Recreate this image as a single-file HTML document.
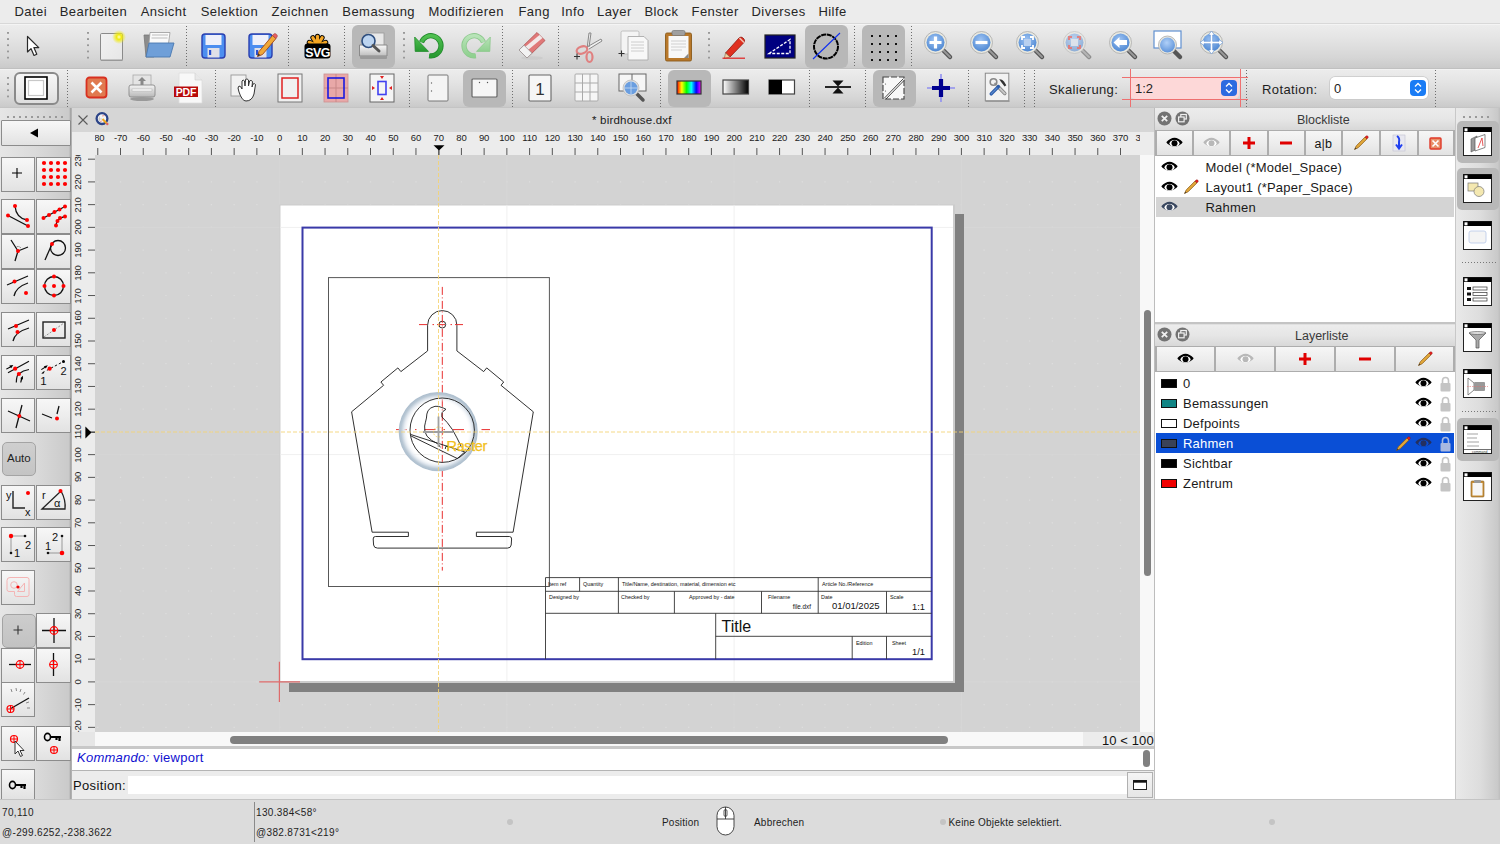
<!DOCTYPE html>
<html><head><meta charset="utf-8"><style>
*{margin:0;padding:0;box-sizing:border-box}
html,body{width:1500px;height:844px;overflow:hidden;background:#e6e6e6;font-family:"Liberation Sans",sans-serif;color:#222}
.a{position:absolute}
.t{position:absolute;white-space:nowrap;line-height:1}
svg{position:absolute;overflow:visible}
#menu{left:0;top:0;width:1500px;height:24px;background:#ececec;border-bottom:1px solid #d8d8d8}
#menu .t{top:5px;font-size:13px;letter-spacing:0.45px;color:#262626}
.tb{left:0;width:1500px;background:linear-gradient(#ececec,#e6e6e6 25%,#d6d6d6 75%,#cacaca)}
#tb1{top:24px;height:45px;border-bottom:1px solid #c0c0c0;border-top:1px solid #f4f4f4}
#tb2{top:69px;height:39px;border-bottom:1px solid #c4c4c4;border-top:1px solid #f2f2f2}
.sep{position:absolute;width:1px;background:linear-gradient(#6e6e6e 50%,transparent 50%) 0 0/1px 3px repeat-y}
.hdl{position:absolute;width:2px;background:linear-gradient(#999 2px,transparent 2px) 0 0/2px 6.2px repeat-y}
.chk{position:absolute;background:#b8b8b8;border-radius:6px}
#left{left:0;top:108px;width:72px;height:691px;background:linear-gradient(90deg,#e6e6e6,#dadada 50%,#cacaca 96%,#a4a4a4 98%,#b8b8b8)}
.btn{position:absolute;background:linear-gradient(#f7f7f7,#eeeeee 45%,#e2e2e2);border:1.5px solid #8c8c8c}
.grp{position:absolute;left:0;width:70px;background:linear-gradient(90deg,#dedede,#cdcdcd 80%,#c0c0c0)}
#tabbar{left:72px;top:108px;width:1082px;height:24px;background:#d6d6d6}
#hruler{left:72px;top:132px;width:1082px;height:23px;background:#ececec}
#vruler{left:72px;top:155px;width:23px;height:577px;background:#ececec}
#vscroll{left:1140px;top:155px;width:14px;height:577px;background:#f8f8f8}
#hscroll{left:95px;top:732px;width:988px;height:14px;background:#f8f8f8}
#zoomlbl{left:1083px;top:732px;width:71px;height:14px;background:#ececec}
#cmdsep{left:72px;top:746px;width:1082px;height:3px;background:#c8c8c8}
#cmd{left:72px;top:749px;width:1082px;height:22px;background:#fff;border-bottom:1.5px solid #b4b4b4}
#posrow{left:72px;top:771px;width:1082px;height:28px;background:#ececec}
#status{left:0;top:799px;width:1500px;height:45px;background:#dcdcdc;border-top:1px solid #c4c4c4}
#dock{left:1154px;top:108px;width:302px;height:691px;background:#fff;border-left:1px solid #bdbdbd}
.dtitle{position:absolute;left:1155px;width:300px;background:linear-gradient(#ececec,#e6e6e6 50%,#d8d8d8)}
.dbar{position:absolute;left:1155px;width:300px;background:#adadad}
.dbtn{position:absolute;background:linear-gradient(#f6f6f6,#ececec 55%,#e2e2e2)}
#strip{left:1456px;top:108px;width:44px;height:691px;background:linear-gradient(90deg,#e9e9e9,#dddddd 55%,#c9c9c9 95%,#bdbdbd)}
.row{position:absolute;left:1156px;width:298px;height:20px;font-size:13px;color:#111}
.rt{position:absolute;white-space:nowrap;line-height:1;font-size:13px;letter-spacing:0.22px;color:#1a1a1a}
.rl{position:absolute;font-size:9.5px;line-height:1;white-space:nowrap;color:#222;letter-spacing:-0.2px}
</style></head><body>
<div id="menu" class="a"><span class="t" style="left:14.4px">Datei</span><span class="t" style="left:59.7px">Bearbeiten</span><span class="t" style="left:140.7px">Ansicht</span><span class="t" style="left:200.7px">Selektion</span><span class="t" style="left:271.5px">Zeichnen</span><span class="t" style="left:342.3px">Bemassung</span><span class="t" style="left:428.4px">Modifizieren</span><span class="t" style="left:518.4px">Fang</span><span class="t" style="left:561.3px">Info</span><span class="t" style="left:597px">Layer</span><span class="t" style="left:644.4px">Block</span><span class="t" style="left:691.5px">Fenster</span><span class="t" style="left:751.5px">Diverses</span><span class="t" style="left:818.4px">Hilfe</span></div>
<div id="tb1" class="a tb"></div><div id="tb2" class="a tb"></div>
<div class="hdl" style="left:7px;top:31.5px;width:2px;height:27px;"></div>
<div class="hdl" style="left:87px;top:31.5px;width:2px;height:27px;"></div>
<div class="hdl" style="left:403px;top:31.5px;width:2px;height:27px;"></div>
<div class="hdl" style="left:708px;top:31.5px;width:2px;height:27px;"></div>
<div class="sep" style="left:186px;top:26px;width:1px;height:41px;"></div>
<div class="sep" style="left:288px;top:26px;width:1px;height:41px;"></div>
<div class="sep" style="left:344px;top:26px;width:1px;height:41px;"></div>
<div class="sep" style="left:502px;top:26px;width:1px;height:41px;"></div>
<div class="sep" style="left:558px;top:26px;width:1px;height:41px;"></div>
<div class="sep" style="left:854px;top:26px;width:1px;height:41px;"></div>
<div class="sep" style="left:911px;top:26px;width:1px;height:41px;"></div>
<div class="chk" style="left:352px;top:25px;width:43px;height:43px;"></div>
<div class="chk" style="left:805px;top:25px;width:43px;height:43px;"></div>
<div class="chk" style="left:862px;top:25px;width:43px;height:43px;"></div>
<svg style="left:26px;top:35px" width="15" height="23" viewBox="0 0 15 23" ><path d="M1.5,1.5 L1.5,17 L5,13.6 L8,20.5 L10.8,19.3 L7.9,12.6 L12.8,12.6 Z" fill="#fff" stroke="#2a2a2a" stroke-width="1.2" stroke-linejoin="round"/></svg>
<svg style="left:99px;top:31px" width="27" height="31" viewBox="0 0 27 31" ><defs><linearGradient id="nd" x1="0" y1="0" x2="1" y2="1"><stop offset="0" stop-color="#f2f2f2"/><stop offset="1" stop-color="#e6e6e6"/></linearGradient><radialGradient id="gl"><stop offset="0" stop-color="#ffffc0"/><stop offset="0.35" stop-color="#f0ea10"/><stop offset="1" stop-color="#f0ea10" stop-opacity="0"/></radialGradient></defs><rect x="1.5" y="2.5" width="22" height="27" rx="1.2" fill="url(#nd)" stroke="#8a8a8a" stroke-width="1"/><rect x="2" y="28.5" width="21.5" height="1.5" fill="#999"/><circle cx="20" cy="6" r="7" fill="url(#gl)"/></svg>
<svg style="left:142px;top:31px" width="34" height="29" viewBox="0 0 34 29" ><path d="M2,4 L12,4 L12,26 L4,26 Z" fill="#8c8c8c" stroke="#777" stroke-width="0.8"/><path d="M8,1.5 L28,1.5 L26,16 L6,22 Z" fill="#fafafa" stroke="#999" stroke-width="0.8"/><path d="M10,4 L26,4 M9.5,7 L25.5,7" stroke="#bbb" stroke-width="1.2"/><path d="M7,12 L32,12 L28,26 L4,26 Z" fill="#6f9fd8" stroke="#4a78b0" stroke-width="0.9"/></svg>
<svg style="left:201px;top:33px" width="26" height="27" viewBox="0 0 26 27" ><rect x="1" y="1" width="23" height="24" rx="3" fill="#4c8ef0" stroke="#2a3fb0" stroke-width="1.4"/><rect x="4.5" y="2" width="16" height="10" fill="#eef0fa"/><rect x="6.5" y="15" width="12" height="9.5" fill="#e0e0e8"/><rect x="8" y="17" width="2.2" height="5" fill="#2a50d0"/></svg>
<svg style="left:248px;top:31px" width="30" height="30" viewBox="0 0 30 30" ><g transform="translate(0,2)"><rect x="1" y="1" width="23" height="24" rx="3" fill="#4c8ef0" stroke="#2a3fb0" stroke-width="1.4"/><rect x="4.5" y="2" width="16" height="10" fill="#eef0fa"/><rect x="6.5" y="15" width="12" height="9.5" fill="#e0e0e8"/><rect x="8" y="17" width="2.2" height="5" fill="#2a50d0"/></g><path d="M9.5,25.5 L11,20.5 L24.5,4.5 L28,7.5 L14.5,23.5 Z" fill="#f0a838" stroke="#a04818" stroke-width="0.9" stroke-linejoin="round"/><path d="M24.5,4.5 L25.8,3 Q27,2 28.3,3.2 L29,3.9 Q29.8,5 29,6 L28,7.5 Z" fill="#e86060" stroke="#a04040" stroke-width="0.6"/><path d="M9.5,25.5 L10.4,22.5 L12.3,24 Z" fill="#333"/></svg>
<svg style="left:304px;top:33px" width="27" height="26" viewBox="0 0 27 26" ><path d="M13.5,12.5 L5.23,9.35" stroke="#000" stroke-width="5" stroke-linecap="round"/><path d="M13.5,12.5 L8.84,4.70" stroke="#000" stroke-width="5" stroke-linecap="round"/><path d="M13.5,12.5 L13.50,3.30" stroke="#000" stroke-width="5" stroke-linecap="round"/><path d="M13.5,12.5 L18.16,4.70" stroke="#000" stroke-width="5" stroke-linecap="round"/><path d="M13.5,12.5 L21.77,9.35" stroke="#000" stroke-width="5" stroke-linecap="round"/><path d="M13.5,12.5 L5.23,9.35" stroke="#f5a623" stroke-width="3.2" stroke-linecap="round"/><path d="M13.5,12.5 L8.84,4.70" stroke="#f5a623" stroke-width="3.2" stroke-linecap="round"/><path d="M13.5,12.5 L13.50,3.30" stroke="#f5a623" stroke-width="3.2" stroke-linecap="round"/><path d="M13.5,12.5 L18.16,4.70" stroke="#f5a623" stroke-width="3.2" stroke-linecap="round"/><path d="M13.5,12.5 L21.77,9.35" stroke="#f5a623" stroke-width="3.2" stroke-linecap="round"/><rect x="0.5" y="10.5" width="26" height="15" rx="3" fill="#000"/><text x="13.5" y="23.6" font-family="Liberation Sans" font-weight="bold" font-size="12.5" fill="#fff" text-anchor="middle" letter-spacing="-0.6" transform="scale(1,1.08)" style="transform-origin:13.5px 23.6px">SVG</text></svg>
<svg style="left:358px;top:31px" width="31" height="30" viewBox="0 0 31 30" ><defs><linearGradient id="pr" x1="0" y1="0" x2="0" y2="1"><stop offset="0" stop-color="#fafafa"/><stop offset="1" stop-color="#bdbdbd"/></linearGradient></defs><rect x="9" y="2" width="17" height="14" fill="#e8e8e8" stroke="#999" stroke-width="0.8"/><path d="M1.5,14 L29,14 L29,25 L1.5,25 Z" fill="url(#pr)" stroke="#8a8a8a" stroke-width="1"/><rect x="2" y="25" width="27" height="3" rx="1" fill="#9a9a9a"/><circle cx="10.5" cy="10" r="6.5" fill="#bcd4f0" stroke="#2e4e7e" stroke-width="1.6"/><path d="M15,14.5 L21,20" stroke="#555" stroke-width="3" stroke-linecap="round"/></svg>
<svg style="left:413px;top:32px" width="32" height="28" viewBox="0 0 32 28" ><defs><linearGradient id="ugu" x1="0" y1="0" x2="0" y2="1"><stop offset="0" stop-color="#50c050"/><stop offset="1" stop-color="#289a30"/></linearGradient></defs><path d="M8.5,10.2 A10.1,10.1 0 1 1 16.2,23.8" fill="none" stroke="#1f8a2a" stroke-width="5.2"/><path d="M8.5,10.2 A10.1,10.1 0 1 1 16.2,23.8" fill="none" stroke="url(#ugu)" stroke-width="3.6"/><path d="M1.7,5 L2.2,19.4 L15.5,19.4 Z" fill="url(#ugu)" stroke="#1f8a2a" stroke-width="0.8" stroke-linejoin="round"/></svg>
<svg style="left:460px;top:32px" width="32" height="28" viewBox="0 0 32 28" ><g transform="translate(32,0) scale(-1,1)"><defs><linearGradient id="ugr" x1="0" y1="0" x2="0" y2="1"><stop offset="0" stop-color="#b8e4b8"/><stop offset="1" stop-color="#90d090"/></linearGradient></defs><path d="M8.5,10.2 A10.1,10.1 0 1 1 16.2,23.8" fill="none" stroke="#8cc88c" stroke-width="5.2"/><path d="M8.5,10.2 A10.1,10.1 0 1 1 16.2,23.8" fill="none" stroke="url(#ugr)" stroke-width="3.6"/><path d="M1.7,5 L2.2,19.4 L15.5,19.4 Z" fill="url(#ugr)" stroke="#8cc88c" stroke-width="0.8" stroke-linejoin="round"/></g></svg>
<svg style="left:517px;top:31px" width="30" height="31" viewBox="0 0 30 31" ><ellipse cx="15" cy="27" rx="11" ry="1.8" fill="#c8c8c8" opacity="0.7"/><path d="M2,19 L20,1.5 L28,9.5 L10,27 Z" fill="#e07878" stroke="#b05050" stroke-width="0.8" stroke-linejoin="round"/><path d="M8,16 L22.5,4 L25.5,7 L11,19 Z" fill="#f4f4f4" opacity="0.9"/><path d="M2,19 L7,14.2 L15,22.2 L10,27 Z" fill="#f2f2f2" stroke="#999" stroke-width="0.8" stroke-linejoin="round"/></svg>
<svg style="left:572px;top:30px" width="31" height="33" viewBox="0 0 31 33" ><path d="M15,19 L17,3 L19,3 L17,17 M15,17 L29,9 L30,11 L17,19" fill="#f0f0f0" stroke="#888" stroke-width="1"/><ellipse cx="10" cy="20" rx="5.5" ry="3.5" fill="none" stroke="#e08080" stroke-width="2.2" transform="rotate(-20 10 20)"/><ellipse cx="17.5" cy="27" rx="3" ry="5" fill="none" stroke="#e08080" stroke-width="2.2"/><path d="M2,26.5 L8,26.5 M5,23.5 L5,29.5" stroke="#333" stroke-width="1.1"/></svg>
<svg style="left:617px;top:29px" width="33" height="34" viewBox="0 0 33 34" ><rect x="4" y="2" width="18" height="23" rx="1.5" fill="#f4f4f4" stroke="#bbb" stroke-width="0.9"/><path d="M11,7.5 L27,7.5 L31,11.5 L31,31 L11,31 Z" fill="#f8f8f8" stroke="#aaa" stroke-width="0.9"/><path d="M14,13 L27,13 M14,16 L27,16 M14,19 L27,19 M14,22 L27,22" stroke="#c8c8c8" stroke-width="0.9"/><path d="M1.5,24.5 L7.5,24.5 M4.5,21.5 L4.5,27.5" stroke="#333" stroke-width="1.1"/></svg>
<svg style="left:664px;top:29px" width="30" height="34" viewBox="0 0 30 34" ><rect x="1.5" y="4" width="26" height="28" rx="1.5" fill="#b8782a" stroke="#8a5a1a" stroke-width="0.9"/><rect x="4.5" y="7" width="20" height="22" fill="#f8f8f8"/><path d="M7,12 L22,12 M7,15 L22,15 M7,18 L22,18 M7,21 L18,21" stroke="#ccc" stroke-width="0.9"/><rect x="8" y="1.5" width="13" height="5" rx="1.5" fill="#a0a0a0" stroke="#777" stroke-width="0.7"/><path d="M20,29 L24.5,24.5 L24.5,29 Z" fill="#888"/></svg>
<svg style="left:722px;top:34px" width="25" height="25" viewBox="0 0 25 25" ><path d="M3.5,19 L17,4 Q19,2 21,4 L22,5 Q23.5,7 21.5,9 L8,23 Z" fill="#e03020" stroke="#901810" stroke-width="0.8"/><path d="M17.5,4 L22,8.5" stroke="#f0c0b0" stroke-width="1.6"/><path d="M3.5,19 L8,23 L2.3,24.5 Z" fill="#f0d0a0" stroke="#806040" stroke-width="0.6"/><path d="M0.5,24.2 L23,24.2" stroke="#e02020" stroke-width="1.2"/></svg>
<svg style="left:764px;top:34px" width="32" height="25" viewBox="0 0 32 25" ><rect x="1" y="1" width="30" height="23" fill="#000080" stroke="#222" stroke-width="1.2"/><path d="M5,19.5 L26,5.5 L26,19.5 Z" fill="none" stroke="#fff" stroke-width="1.3" stroke-dasharray="3,1.5"/></svg>
<svg style="left:811px;top:31px" width="31" height="31" viewBox="0 0 31 31" ><circle cx="15" cy="15.5" r="12" fill="none" stroke="#000" stroke-width="2" stroke-dasharray="5,0.7"/><path d="M2,28 L29,2" stroke="#1030f0" stroke-width="1.1"/></svg>
<svg style="left:870px;top:34px" width="28" height="28" viewBox="0 0 28 28" ><rect x="1" y="1" width="2" height="2" fill="#111"/><rect x="1" y="9" width="2" height="2" fill="#111"/><rect x="1" y="17" width="2" height="2" fill="#111"/><rect x="1" y="25" width="2" height="2" fill="#111"/><rect x="9" y="1" width="2" height="2" fill="#111"/><rect x="9" y="9" width="2" height="2" fill="#111"/><rect x="9" y="17" width="2" height="2" fill="#111"/><rect x="9" y="25" width="2" height="2" fill="#111"/><rect x="17" y="1" width="2" height="2" fill="#111"/><rect x="17" y="9" width="2" height="2" fill="#111"/><rect x="17" y="17" width="2" height="2" fill="#111"/><rect x="17" y="25" width="2" height="2" fill="#111"/><rect x="25" y="1" width="2" height="2" fill="#111"/><rect x="25" y="9" width="2" height="2" fill="#111"/><rect x="25" y="17" width="2" height="2" fill="#111"/><rect x="25" y="25" width="2" height="2" fill="#111"/></svg>
<svg style="left:923px;top:30px" width="31" height="31" viewBox="0 0 31 31" ><defs><radialGradient id="zg923" cx="0.45" cy="0.35" r="0.7"><stop offset="0" stop-color="#9ec4f4"/><stop offset="1" stop-color="#4a84d0"/></radialGradient></defs><path d="M20,20 L27,27" stroke="#555" stroke-width="4.5" stroke-linecap="round"/><path d="M20,20 L27,27" stroke="#999" stroke-width="2" stroke-linecap="round"/><circle cx="12.5" cy="12.5" r="11" fill="#e8e8e0" stroke="#aaa" stroke-width="0.8"/><circle cx="12.5" cy="12.5" r="9" fill="url(#zg923)"/><path d="M12.5,6.5 L12.5,18.5 M6.5,12.5 L18.5,12.5" stroke="#fff" stroke-width="3.2"/></svg>
<svg style="left:969px;top:30px" width="31" height="31" viewBox="0 0 31 31" ><defs><radialGradient id="zg969" cx="0.45" cy="0.35" r="0.7"><stop offset="0" stop-color="#9ec4f4"/><stop offset="1" stop-color="#4a84d0"/></radialGradient></defs><path d="M20,20 L27,27" stroke="#555" stroke-width="4.5" stroke-linecap="round"/><path d="M20,20 L27,27" stroke="#999" stroke-width="2" stroke-linecap="round"/><circle cx="12.5" cy="12.5" r="11" fill="#e8e8e0" stroke="#aaa" stroke-width="0.8"/><circle cx="12.5" cy="12.5" r="9" fill="url(#zg969)"/><path d="M6.5,12.5 L18.5,12.5" stroke="#fff" stroke-width="3.2"/></svg>
<svg style="left:1015px;top:30px" width="31" height="31" viewBox="0 0 31 31" ><defs><radialGradient id="zg1015" cx="0.45" cy="0.35" r="0.7"><stop offset="0" stop-color="#9ec4f4"/><stop offset="1" stop-color="#4a84d0"/></radialGradient></defs><path d="M20,20 L27,27" stroke="#555" stroke-width="4.5" stroke-linecap="round"/><path d="M20,20 L27,27" stroke="#999" stroke-width="2" stroke-linecap="round"/><circle cx="12.5" cy="12.5" r="11" fill="#e8e8e0" stroke="#aaa" stroke-width="0.8"/><circle cx="12.5" cy="12.5" r="9" fill="url(#zg1015)"/><path d="M7,10 L7,7 L10,7 M15,7 L18,7 L18,10 M18,15 L18,18 L15,18 M10,18 L7,18 L7,15" fill="none" stroke="#fff" stroke-width="1.8"/><rect x="9" y="9" width="7" height="7" fill="#b8d0f0"/></svg>
<div class="a" style="left:1062px;top:30px;width:32px;height:31px;opacity:0.55"><svg style="left:0px;top:0px" width="31" height="31" viewBox="0 0 31 31" ><defs><radialGradient id="zg0" cx="0.45" cy="0.35" r="0.7"><stop offset="0" stop-color="#9ec4f4"/><stop offset="1" stop-color="#4a84d0"/></radialGradient></defs><path d="M20,20 L27,27" stroke="#555" stroke-width="4.5" stroke-linecap="round"/><path d="M20,20 L27,27" stroke="#999" stroke-width="2" stroke-linecap="round"/><circle cx="12.5" cy="12.5" r="11" fill="#e8e8e0" stroke="#aaa" stroke-width="0.8"/><circle cx="12.5" cy="12.5" r="9" fill="url(#zg0)"/><path d="M7,10 L7,7 L10,7 M15,7 L18,7 L18,10 M18,15 L18,18 L15,18 M10,18 L7,18 L7,15" fill="none" stroke="#e03030" stroke-width="2"/><rect x="9" y="9" width="7" height="7" fill="#d8e4f4"/></svg>
</div><svg style="left:1108px;top:30px" width="31" height="31" viewBox="0 0 31 31" ><defs><radialGradient id="zg1108" cx="0.45" cy="0.35" r="0.7"><stop offset="0" stop-color="#9ec4f4"/><stop offset="1" stop-color="#4a84d0"/></radialGradient></defs><path d="M20,20 L27,27" stroke="#555" stroke-width="4.5" stroke-linecap="round"/><path d="M20,20 L27,27" stroke="#999" stroke-width="2" stroke-linecap="round"/><circle cx="12.5" cy="12.5" r="11" fill="#e8e8e0" stroke="#aaa" stroke-width="0.8"/><circle cx="12.5" cy="12.5" r="9" fill="url(#zg1108)"/><path d="M5.5,12.5 L11.5,7 L11.5,10 L19,10 L19,15 L11.5,15 L11.5,18 Z" fill="#fff"/></svg>
<svg style="left:1153px;top:30px" width="31" height="31" viewBox="0 0 31 31" ><defs><radialGradient id="zw" cx="0.45" cy="0.35" r="0.7"><stop offset="0" stop-color="#b0d0f8"/><stop offset="1" stop-color="#5a90d8"/></radialGradient></defs><rect x="1" y="1" width="27" height="17" fill="#fff" stroke="#6090d0" stroke-width="1.2"/><path d="M20,20 L27,27" stroke="#555" stroke-width="4.5" stroke-linecap="round"/><circle cx="14.5" cy="15" r="9" fill="#e8e8e0" stroke="#aaa" stroke-width="0.8"/><circle cx="14.5" cy="15" r="7.5" fill="url(#zw)"/></svg>
<svg style="left:1199px;top:30px" width="31" height="31" viewBox="0 0 31 31" ><defs><radialGradient id="zg1199" cx="0.45" cy="0.35" r="0.7"><stop offset="0" stop-color="#9ec4f4"/><stop offset="1" stop-color="#4a84d0"/></radialGradient></defs><path d="M20,20 L27,27" stroke="#555" stroke-width="4.5" stroke-linecap="round"/><path d="M20,20 L27,27" stroke="#999" stroke-width="2" stroke-linecap="round"/><circle cx="12.5" cy="12.5" r="11" fill="#e8e8e0" stroke="#aaa" stroke-width="0.8"/><circle cx="12.5" cy="12.5" r="9" fill="url(#zg1199)"/><path d="M12.5,1 L9.5,5 L11.3,5 L11.3,11.3 L5,11.3 L5,9.5 L1,12.5 L5,15.5 L5,13.7 L11.3,13.7 L11.3,20 L9.5,20 L12.5,24 L15.5,20 L13.7,20 L13.7,13.7 L20,13.7 L20,15.5 L24,12.5 L20,9.5 L20,11.3 L13.7,11.3 L13.7,5 L15.5,5 Z" fill="#fff" stroke="#6a9ad8" stroke-width="0.7"/></svg>
<div class="hdl" style="left:7px;top:77px;width:2px;height:21px;"></div>
<div class="sep" style="left:67px;top:70px;width:1px;height:37px;"></div>
<div class="sep" style="left:215px;top:70px;width:1px;height:37px;"></div>
<div class="sep" style="left:409px;top:70px;width:1px;height:37px;"></div>
<div class="sep" style="left:512px;top:70px;width:1px;height:37px;"></div>
<div class="sep" style="left:660px;top:70px;width:1px;height:37px;"></div>
<div class="sep" style="left:809px;top:70px;width:1px;height:37px;"></div>
<div class="sep" style="left:865px;top:70px;width:1px;height:37px;"></div>
<div class="sep" style="left:968px;top:70px;width:1px;height:37px;"></div>
<div class="sep" style="left:1024px;top:70px;width:1px;height:37px;"></div>
<div class="sep" style="left:1034px;top:70px;width:1px;height:37px;"></div>
<div class="sep" style="left:1246px;top:70px;width:1px;height:37px;"></div>
<div class="sep" style="left:1435px;top:70px;width:1px;height:37px;"></div>
<div class="chk" style="left:463px;top:70px;width:43px;height:37px;"></div>
<div class="chk" style="left:668px;top:70px;width:43px;height:37px;"></div>
<div class="chk" style="left:873px;top:70px;width:43px;height:37px;"></div>
<div class="a" style="left:14px;top:72px;width:45px;height:33px;border:2.2px solid #8a8a8a;border-radius:6px;background:linear-gradient(#f6f6f6,#ececec 50%,#dedede)"></div>
<svg style="left:24px;top:76px" width="25" height="25" viewBox="0 0 25 25" ><rect x="1" y="1" width="22" height="22" fill="#fff" stroke="#000" stroke-width="1.6"/><rect x="4.5" y="4.5" width="15" height="15" fill="none" stroke="#c8c8c8" stroke-width="1.2"/></svg>
<svg style="left:85px;top:76px" width="23" height="23" viewBox="0 0 23 23" ><rect x="1.5" y="1.5" width="20" height="20" rx="3" fill="#e07a50" stroke="#d83020" stroke-width="1.8"/><path d="M6.5,6.5 L16.5,16.5 M16.5,6.5 L6.5,16.5" stroke="#fff" stroke-width="2.6"/></svg>
<svg style="left:128px;top:74px" width="29" height="28" viewBox="0 0 29 28" ><defs><linearGradient id="pp" x1="0" y1="0" x2="0" y2="1"><stop offset="0" stop-color="#f4f4f4"/><stop offset="1" stop-color="#b8b8b8"/></linearGradient></defs><rect x="5" y="1" width="18" height="11" fill="#e4e4e4" stroke="#aaa" stroke-width="0.8"/><path d="M14,3 L10,7 L12.5,7 L12.5,11 L15.5,11 L15.5,7 L18,7 Z" fill="#888"/><rect x="1" y="11" width="26" height="12" rx="2" fill="url(#pp)" stroke="#8a8a8a" stroke-width="0.9"/><rect x="4" y="15" width="20" height="2" fill="#fff" stroke="#aaa" stroke-width="0.5"/><ellipse cx="14" cy="25" rx="12" ry="2" fill="#999"/></svg>
<svg style="left:173px;top:72px" width="31" height="33" viewBox="0 0 31 33" ><path d="M6,1 L22,1 L29,8 L29,31 L6,31 Z" fill="#f8f8f8" stroke="#ddd" stroke-width="0.8"/><path d="M22,1 L22,8 L29,8" fill="#e8e8e8" stroke="#ccc" stroke-width="0.6"/><rect x="1" y="14.5" width="24" height="10.5" fill="#b80a0a"/><text x="13" y="23.6" font-family="Liberation Sans" font-weight="bold" font-size="10.5" fill="#fff" text-anchor="middle" letter-spacing="-0.2">PDF</text></svg>
<svg style="left:230px;top:74px" width="28" height="28" viewBox="0 0 28 28" ><rect x="1" y="1" width="15" height="21" fill="#f2f2f2" stroke="#999" stroke-width="0.9"/><path d="M9,18 Q7,13 9,12 Q11,12 12,15 L12,7 Q13,5 14.5,7 L15,12 L15.5,5.5 Q17,4 18.5,6 L18.5,12 L19.5,7 Q21,5.5 22.5,7.5 L22,13 L23,10 Q24.5,9 25.5,10.5 L24,20 Q22,27 16,27 Q12,27 9,18 Z" fill="#fff" stroke="#333" stroke-width="1"/></svg>
<svg style="left:277px;top:73px" width="27" height="30" viewBox="0 0 27 30" ><rect x="1" y="1" width="24" height="28" fill="#f0f0f0" stroke="#777" stroke-width="1"/><rect x="5" y="5" width="16" height="20" fill="none" stroke="#e02020" stroke-width="1.5"/></svg>
<svg style="left:323px;top:73px" width="27" height="30" viewBox="0 0 27 30" ><rect x="1" y="1" width="24" height="28" fill="#e8a8a8" stroke="#cc9090" stroke-width="0.8"/><path d="M13,1 L13,29 M1,15 L25,15" stroke="#c88888" stroke-width="1"/><rect x="5" y="5" width="16" height="20" fill="none" stroke="#1818e0" stroke-width="1.6"/></svg>
<svg style="left:369px;top:73px" width="27" height="30" viewBox="0 0 27 30" ><rect x="1" y="1" width="24" height="28" fill="#f4f4f4" stroke="#666" stroke-width="1"/><rect x="9" y="8.5" width="8" height="13" fill="none" stroke="#4040f0" stroke-width="1.6"/><path d="M11,3 L15,3 L13,6 Z M11,27 L15,27 L13,24 Z M3,13 L3,17 L6,15 Z M23,13 L23,17 L20,15 Z" fill="#e02020"/></svg>
<svg style="left:427px;top:74px" width="23" height="28" viewBox="0 0 23 28" ><rect x="1" y="1" width="20" height="26" rx="1" fill="#f4f4f4" stroke="#777" stroke-width="1"/><circle cx="4.5" cy="9" r="0.7" fill="#666"/><circle cx="4.5" cy="17" r="0.7" fill="#666"/></svg>
<svg style="left:471px;top:78px" width="27" height="21" viewBox="0 0 27 21" ><rect x="1" y="1" width="25" height="18" rx="1" fill="#f6f6f6" stroke="#666" stroke-width="1.2"/><circle cx="8.5" cy="4.5" r="0.7" fill="#555"/><circle cx="16.5" cy="4.5" r="0.7" fill="#555"/></svg>
<svg style="left:528px;top:74px" width="25" height="29" viewBox="0 0 25 29" ><rect x="1" y="1" width="22" height="26" rx="1" fill="#f6f6f6" stroke="#666" stroke-width="1.1"/><text x="12" y="21" font-family="Liberation Sans" font-size="17" fill="#333" text-anchor="middle">1</text></svg>
<svg style="left:574px;top:73px" width="25" height="30" viewBox="0 0 25 30" ><rect x="1" y="1" width="23" height="27" rx="1" fill="#f6f6f6" stroke="#aaa" stroke-width="1"/><path d="M8.5,1 L8.5,28 M16,1 L16,28 M1,10 L24,10 M1,19 L24,19" stroke="#aaa" stroke-width="1"/></svg>
<svg style="left:618px;top:73px" width="29" height="30" viewBox="0 0 29 30" ><rect x="1" y="1" width="27" height="17" fill="#f6f6f6" stroke="#666" stroke-width="1"/><path d="M14,1 L14,18" stroke="#666" stroke-width="1"/><path d="M17,19 L25,27" stroke="#555" stroke-width="3.5" stroke-linecap="round"/><circle cx="13" cy="15" r="8" fill="#e0e0e0" stroke="#bbb" stroke-width="0.8"/><circle cx="13" cy="15" r="6.5" fill="#6a9ee0"/><path d="M6.5,15 L19.5,15 M13,8.5 L13,21.5" stroke="#c8dcf4" stroke-width="0.8"/></svg>
<svg style="left:676px;top:80px" width="27" height="16" viewBox="0 0 27 16" ><defs><linearGradient id="rb"><stop offset="0" stop-color="#ff0000"/><stop offset="0.2" stop-color="#ffff00"/><stop offset="0.4" stop-color="#00ff00"/><stop offset="0.6" stop-color="#00ffff"/><stop offset="0.8" stop-color="#0000ff"/><stop offset="1" stop-color="#ff00ff"/></linearGradient></defs><rect x="1" y="1" width="24" height="13" fill="url(#rb)" stroke="#333" stroke-width="1.2"/></svg>
<svg style="left:722px;top:79px" width="28" height="17" viewBox="0 0 28 17" ><defs><linearGradient id="gr"><stop offset="0" stop-color="#fff"/><stop offset="1" stop-color="#000"/></linearGradient></defs><rect x="1" y="1" width="25.5" height="14" fill="url(#gr)" stroke="#444" stroke-width="1.2"/></svg>
<svg style="left:768px;top:79px" width="28" height="17" viewBox="0 0 28 17" ><rect x="1" y="1" width="25.5" height="14" fill="#fff" stroke="#444" stroke-width="1.2"/><rect x="1" y="1" width="13" height="14" fill="#000"/></svg>
<svg style="left:824px;top:80px" width="28" height="14" viewBox="0 0 28 14" ><path d="M1,7 L27,7" stroke="#111" stroke-width="1.8"/><path d="M8.5,0.5 L19.5,0.5 L14,6.5 Z M8.5,13.5 L19.5,13.5 L14,7.5 Z" fill="#111"/></svg>
<svg style="left:882px;top:76px" width="24" height="25" viewBox="0 0 24 25" ><rect x="1" y="1" width="21" height="22" fill="#f8f8f8" stroke="#444" stroke-width="1.1" stroke-dasharray="6,2"/><path d="M2,22.5 L21.5,2.5 M4,23 L22,4.5" stroke="#333" stroke-width="0.9"/><circle cx="3.5" cy="8" r="0.6" fill="#555"/><circle cx="3.5" cy="15" r="0.6" fill="#555"/></svg>
<svg style="left:926px;top:73px" width="30" height="30" viewBox="0 0 30 30" ><path d="M15,1 L15,29 M1,15 L29,15" stroke="#9090f0" stroke-width="1.6"/><path d="M15,6 L15,24 M6,15 L24,15" stroke="#000090" stroke-width="4.2"/></svg>
<svg style="left:984px;top:72px" width="27" height="31" viewBox="0 0 27 31" ><rect x="1.3" y="1.2" width="23.5" height="27.6" fill="#f2f2f2" stroke="#8a8a8a" stroke-width="1"/><rect x="1.5" y="28.5" width="24" height="1.5" fill="#9a9a9a"/><path d="M14,14.5 L20.8,21.5" stroke="#777" stroke-width="3.4" stroke-linecap="round"/><path d="M14,14.5 L20.8,21.5" stroke="#c8c8c8" stroke-width="2" stroke-linecap="round"/><path d="M7.2,21.9 L14.4,14.6" stroke="#2a5aa8" stroke-width="3.4" stroke-linecap="round"/><path d="M7.2,21.9 L13,16" stroke="#5a8ad0" stroke-width="1.2" stroke-linecap="round"/><path d="M12.5,13 L10.5,11" stroke="#999" stroke-width="2"/><circle cx="9.5" cy="10" r="3.3" fill="none" stroke="#888" stroke-width="1.6"/><path d="M15.2,7.2 Q18,7 20,9.5 L22.3,13.3 L20.6,14.5 L17.5,10.5 Q16.5,9 15.2,7.2 Z" fill="#333"/></svg>
<span class="t" style="left:1049px;top:82.5px;font-size:13px;letter-spacing:0.38px;color:#1e1e1e">Skalierung:</span>
<div class="a" style="left:1130px;top:77px;width:109px;height:22px;background:#fdd8d8;border-radius:5px"></div>
<div class="a" style="left:1122px;top:76.5px;width:126px;height:1.2px;background:#ee7070"></div>
<div class="a" style="left:1122px;top:98.5px;width:126px;height:1.2px;background:#ee7070"></div>
<div class="a" style="left:1129.5px;top:69px;width:1.2px;height:38px;background:#ee7070"></div>
<div class="a" style="left:1239.5px;top:69px;width:1.2px;height:38px;background:#ee7070"></div>
<span class="t" style="left:1135px;top:81.5px;font-size:13px;color:#222">1:2</span>
<svg style="left:1221px;top:80px" width="16" height="16" viewBox="0 0 16 16" ><rect x="0" y="0" width="16" height="16" rx="4" fill="#2d6ae0"/><path d="M5,6.5 L8,3.5 L11,6.5 M5,9.5 L8,12.5 L11,9.5" fill="none" stroke="#fff" stroke-width="1.3"/></svg>
<span class="t" style="left:1262px;top:83px;font-size:13px;letter-spacing:0.4px;color:#1e1e1e">Rotation:</span>
<div class="a" style="left:1330px;top:77px;width:98px;height:22px;background:#fff;border-radius:5px;box-shadow:0 0 0 0.8px #c8c8c8"></div>
<span class="t" style="left:1334px;top:81.5px;font-size:13px;color:#222">0</span>
<svg style="left:1410px;top:80px" width="16" height="16" viewBox="0 0 16 16" ><rect x="0" y="0" width="16" height="16" rx="4" fill="#1a7cf5"/><path d="M5,6.5 L8,3.5 L11,6.5 M5,9.5 L8,12.5 L11,9.5" fill="none" stroke="#fff" stroke-width="1.3"/></svg>
<div id="left" class="a"></div>
<div class="hdl" style="left:0px;top:115px;width:3px;height:3px;display:none"></div>
<div class="a" style="left:7px;top:116px;width:58px;height:2px;background:linear-gradient(90deg,#999 2px,transparent 2px) 0 0/6px 2px repeat-x"></div>
<div class="btn" style="left:1px;top:119.8px;width:70px;height:26px;border-radius:1px"></div>
<svg style="left:29px;top:128px" width="10" height="10" viewBox="0 0 10 10" ><path d="M1,5 L9,0.5 L9,9.5 Z" fill="#000"/></svg>
<div class="btn" style="left:1px;top:156.5px;width:34.4px;height:35px"></div>
<div class="btn" style="left:36.3px;top:156.5px;width:34.4px;height:35px"></div>
<div class="btn" style="left:1px;top:199.2px;width:34.4px;height:35px"></div>
<div class="btn" style="left:36.3px;top:199.2px;width:34.4px;height:35px"></div>
<div class="btn" style="left:1px;top:234px;width:34.4px;height:35px"></div>
<div class="btn" style="left:36.3px;top:234px;width:34.4px;height:35px"></div>
<div class="btn" style="left:1px;top:268.8px;width:34.4px;height:35px"></div>
<div class="btn" style="left:36.3px;top:268.8px;width:34.4px;height:35px"></div>
<div class="btn" style="left:1px;top:312.4px;width:34.4px;height:35px"></div>
<div class="btn" style="left:36.3px;top:312.4px;width:34.4px;height:35px"></div>
<div class="btn" style="left:1px;top:355.3px;width:34.4px;height:35px"></div>
<div class="btn" style="left:36.3px;top:355.3px;width:34.4px;height:35px"></div>
<div class="btn" style="left:1px;top:398.3px;width:34.4px;height:35px"></div>
<div class="btn" style="left:36.3px;top:398.3px;width:34.4px;height:35px"></div>
<div class="btn" style="left:1px;top:484.5px;width:34.4px;height:35px"></div>
<div class="btn" style="left:36.3px;top:484.5px;width:34.4px;height:35px"></div>
<div class="btn" style="left:1px;top:527.2px;width:34.4px;height:35px"></div>
<div class="btn" style="left:36.3px;top:527.2px;width:34.4px;height:35px"></div>
<div class="btn" style="left:36.3px;top:613.3px;width:34.4px;height:35px"></div>
<div class="btn" style="left:1px;top:647.5px;width:34.4px;height:35px"></div>
<div class="btn" style="left:36.3px;top:647.5px;width:34.4px;height:35px"></div>
<div class="btn" style="left:1px;top:682.2px;width:34.4px;height:35px"></div>
<div class="btn" style="left:1px;top:726.3px;width:34.4px;height:35px"></div>
<div class="btn" style="left:36.3px;top:726.3px;width:34.4px;height:35px"></div>
<div class="btn" style="left:1px;top:769px;width:34.4px;height:31px"></div>
<div class="btn" style="left:1px;top:570.3px;width:34.4px;height:34.5px"></div>
<div class="a" style="left:2px;top:441.5px;width:34px;height:34px;background:linear-gradient(#cfcfcf,#c4c4c4);border:1px solid #a4a4a4;border-radius:5px"></div>
<span class="t" style="left:7px;top:453px;font-size:11.5px;color:#222">Auto</span>
<div class="a" style="left:2px;top:613.5px;width:34px;height:34px;background:linear-gradient(#cdcdcd,#c2c2c2);border:1px solid #a4a4a4;border-radius:5px"></div>
<svg style="left:10px;top:166px" width="14" height="14" viewBox="0 0 14 14" ><path d="M7,2 L7,12 M2,7 L12,7" stroke="#000" stroke-width="1.1"/></svg>
<svg style="left:40px;top:160px" width="30" height="28" viewBox="-1.5 -0.5 30 28" ><circle cx="2.5" cy="2.5" r="2.1" fill="#ff0000"/><circle cx="2.5" cy="9.5" r="2.1" fill="#ff0000"/><circle cx="2.5" cy="16.5" r="2.1" fill="#ff0000"/><circle cx="2.5" cy="23.5" r="2.1" fill="#ff0000"/><circle cx="9.5" cy="2.5" r="2.1" fill="#ff0000"/><circle cx="9.5" cy="9.5" r="2.1" fill="#ff0000"/><circle cx="9.5" cy="16.5" r="2.1" fill="#ff0000"/><circle cx="9.5" cy="23.5" r="2.1" fill="#ff0000"/><circle cx="16.5" cy="2.5" r="2.1" fill="#ff0000"/><circle cx="16.5" cy="9.5" r="2.1" fill="#ff0000"/><circle cx="16.5" cy="16.5" r="2.1" fill="#ff0000"/><circle cx="16.5" cy="23.5" r="2.1" fill="#ff0000"/><circle cx="23.5" cy="2.5" r="2.1" fill="#ff0000"/><circle cx="23.5" cy="9.5" r="2.1" fill="#ff0000"/><circle cx="23.5" cy="16.5" r="2.1" fill="#ff0000"/><circle cx="23.5" cy="23.5" r="2.1" fill="#ff0000"/></svg>
<svg style="left:4px;top:202px" width="30" height="30" viewBox="0 0 30 30" ><path d="M4,13.5 L24,24" stroke="#111" stroke-width="1.3"/><path d="M11,4 Q12,16 23,18" fill="none" stroke="#111" stroke-width="1.3"/><circle cx="4" cy="13.5" r="2.0" fill="#ff0000"/><circle cx="24" cy="24" r="2.0" fill="#ff0000"/><circle cx="11" cy="4" r="2.0" fill="#ff0000"/><circle cx="23" cy="18" r="2.0" fill="#ff0000"/></svg>
<svg style="left:39px;top:202px" width="30" height="30" viewBox="0 0 30 30" ><path d="M4.5,16 L26,4.5 M17,23.5 Q18,16 26,14.5" fill="none" stroke="#111" stroke-width="1.3"/><circle cx="4.5" cy="16" r="2.0" fill="#ff0000"/><circle cx="10" cy="13" r="2.0" fill="#ff0000"/><circle cx="15.5" cy="10" r="2.0" fill="#ff0000"/><circle cx="20.5" cy="7.5" r="2.0" fill="#ff0000"/><circle cx="26" cy="4.5" r="2.0" fill="#ff0000"/><circle cx="17" cy="23.5" r="2.0" fill="#ff0000"/><circle cx="18.5" cy="19" r="2.0" fill="#ff0000"/><circle cx="21" cy="16" r="2.0" fill="#ff0000"/><circle cx="26" cy="14.5" r="2.0" fill="#ff0000"/></svg>
<svg style="left:4px;top:236px" width="30" height="30" viewBox="0 0 30 30" ><path d="M7,4 L14,15 L11,25 M14,15 L24,11" fill="none" stroke="#111" stroke-width="1.3"/><path d="M11,12 Q14,9 17,12" fill="none" stroke="#111" stroke-width="0.7" stroke-dasharray="1,1"/><circle cx="14" cy="15" r="2.0" fill="#ff0000"/></svg>
<svg style="left:39px;top:236px" width="30" height="30" viewBox="0 0 30 30" ><circle cx="19" cy="12" r="7.5" fill="none" stroke="#111" stroke-width="1.3"/><path d="M13,8 L6,24" stroke="#111" stroke-width="1.3"/><circle cx="13" cy="8" r="2.0" fill="#ff0000"/></svg>
<svg style="left:4px;top:271px" width="30" height="30" viewBox="0 0 30 30" ><path d="M3,14 L24,5 M10,25 Q12,16 24,12" fill="none" stroke="#111" stroke-width="1.3"/><circle cx="10.5" cy="10.5" r="2.0" fill="#ff0000"/><circle cx="22" cy="22" r="2.0" fill="#ff0000"/></svg>
<svg style="left:39px;top:271px" width="30" height="30" viewBox="0 0 30 30" ><circle cx="15" cy="15" r="9.5" fill="none" stroke="#111" stroke-width="1.3"/><circle cx="15" cy="15" r="2.0" fill="#ff0000"/><circle cx="15" cy="5.5" r="2.0" fill="#ff0000"/><circle cx="15" cy="24.5" r="2.0" fill="#ff0000"/><circle cx="5.5" cy="15" r="2.0" fill="#ff0000"/><circle cx="24.5" cy="15" r="2.0" fill="#ff0000"/></svg>
<svg style="left:4px;top:315px" width="30" height="30" viewBox="0 0 30 30" ><path d="M4,14 L25,5 M9,26 Q11,17 25,13" fill="none" stroke="#111" stroke-width="1.3"/><circle cx="12" cy="11" r="2.0" fill="#ff0000"/><circle cx="13.5" cy="17" r="2.0" fill="#ff0000"/></svg>
<svg style="left:39px;top:315px" width="30" height="30" viewBox="0 0 30 30" ><rect x="4" y="7" width="22" height="16" fill="none" stroke="#222" stroke-width="1.4"/><path d="M5,22 L25,8" stroke="#777" stroke-width="0.8" stroke-dasharray="2,1.5"/><circle cx="15" cy="15" r="2" fill="#ff0000"/></svg>
<svg style="left:0px;top:355px" width="72" height="35" viewBox="0 355 72 35" ><path d="M8,372.7 L29,361.2 M16.3,382.5 Q16.5,375 19,373.8 Q23,370.5 29,369.5" fill="none" stroke="#111" stroke-width="1.2"/><path d="M6,368.8 L10,366.5 L9.3,365.6 L13.3,365 L11.2,368.2 L10.6,367.5 L6.6,369.6 Z M20.2,382.5 L21,378.3 L20.1,378.6 L22.9,375.8 L23,379.6 L22.2,379.2 L21.3,382.6 Z" fill="#000"/><circle cx="15.2" cy="368.7" r="2.1" fill="#ff0000"/><circle cx="18.9" cy="374" r="2.1" fill="#ff0000"/><path d="M46.9,370.3 L64,361.2" stroke="#111" stroke-width="1" stroke-dasharray="2.5,2"/><path d="M41,369.3 L44.5,367 L43.8,366.2 L47.8,365.2 L45.8,368.5 L45.2,367.8 L41.6,370 Z M41.3,373.6 L43.5,371.5 L44.9,371.2 L43.3,373.8 Z" fill="#000"/><circle cx="63.5" cy="361.4" r="1.5" fill="#000"/><circle cx="49.6" cy="368.7" r="2.1" fill="#ff0000"/><text x="40.3" y="384.8" font-family="Liberation Sans" font-size="11.5" fill="#111">1</text><text x="60.6" y="374.9" font-family="Liberation Sans" font-size="11" fill="#111">2</text></svg>
<svg style="left:4px;top:401px" width="30" height="30" viewBox="0 0 30 30" ><path d="M4,10 L26,20 M18,4 L12,27" stroke="#111" stroke-width="1.3"/><circle cx="15.3" cy="15" r="2.0" fill="#ff0000"/></svg>
<svg style="left:39px;top:401px" width="30" height="30" viewBox="0 0 30 30" ><path d="M3,13 L13,17 M20,5 L18,13" stroke="#111" stroke-width="1.3"/><circle cx="18" cy="17.5" r="2.0" fill="#ff0000"/></svg>
<svg style="left:3px;top:486px" width="32" height="32" viewBox="0 0 32 32" ><path d="M10,5 L10,22 L22,22" fill="none" stroke="#222" stroke-width="1.4"/><text x="3" y="13" font-family="Liberation Sans" font-size="11" fill="#111">y</text><text x="22" y="30" font-family="Liberation Sans" font-size="11" fill="#111">x</text><circle cx="25" cy="7" r="2" fill="#ff0000"/></svg>
<svg style="left:38px;top:486px" width="32" height="32" viewBox="0 0 32 32" ><path d="M4,23 L23,5 Q28,14 27,23 Z" fill="none" stroke="#222" stroke-width="1.3"/><text x="4" y="13" font-family="Liberation Sans" font-size="11" fill="#111">r</text><text x="16" y="21" font-family="Liberation Sans" font-size="11" fill="#111">α</text><circle cx="22.5" cy="5" r="2" fill="#ff0000"/></svg>
<svg style="left:3px;top:529px" width="32" height="32" viewBox="0 0 32 32" ><path d="M8,7 L8,24 M8,7 L22,7" stroke="#777" stroke-width="0.7"/><circle cx="8" cy="24" r="1.3" fill="#111"/><circle cx="22" cy="7" r="1.3" fill="#111"/><text x="11" y="28" font-family="Liberation Sans" font-size="11" fill="#111">1</text><text x="22" y="20" font-family="Liberation Sans" font-size="11" fill="#111">2</text><circle cx="8" cy="7" r="2.2" fill="#ff0000"/></svg>
<svg style="left:38px;top:529px" width="32" height="32" viewBox="0 0 32 32" ><path d="M10,24 L24,24 M24,7 L24,24" stroke="#777" stroke-width="0.7"/><circle cx="10" cy="24" r="1.3" fill="#111"/><circle cx="24" cy="7" r="1.3" fill="#111"/><text x="7" y="21" font-family="Liberation Sans" font-size="11" fill="#111">1</text><text x="14" y="12" font-family="Liberation Sans" font-size="11" fill="#111">2</text><circle cx="24" cy="24" r="2.3" fill="#ff0000"/></svg>
<svg style="left:3px;top:573px" width="32" height="30" viewBox="0 0 32 30" ><g fill="none" stroke="#f4b4b4" stroke-width="1"><path d="M7,4.5 L24,4.5 Q26,4.5 26,6.5 L26,21.5 Q26,23.5 24,23.5 L13.5,23.5 Q11.5,23.5 11.5,21.5 L11.5,18.5 L6,18.5 Q4,18.5 4,16.5 L4,7.5 Q4,4.5 7,4.5 Z"/><circle cx="11" cy="12" r="3.3"/><path d="M21.5,10 L21.5,18.5 L14.5,18.5 Z"/></g><circle cx="15" cy="14" r="1.6" fill="#f00000"/></svg>
<svg style="left:12px;top:624px" width="12" height="12" viewBox="0 0 12 12" ><path d="M6,1.5 L6,10.5 M1.5,6 L10.5,6" stroke="#333" stroke-width="1.1"/></svg>
<svg style="left:38px;top:615px" width="32" height="32" viewBox="0 0 32 32" ><path d="M16,3 L16,28 M4,15.5 L28,15.5" stroke="#111" stroke-width="1.3"/><circle cx="16" cy="15.5" r="3.8" fill="none" stroke="#ff0000" stroke-width="1.2"/><path d="M12.2,15.5 L19.8,15.5 M16,11.7 L16,19.3" stroke="#ff0000" stroke-width="1"/></svg>
<svg style="left:3px;top:649px" width="32" height="32" viewBox="0 0 32 32" ><path d="M6,15.5 L28,15.5" stroke="#111" stroke-width="1.3"/><circle cx="17" cy="15.5" r="3.8" fill="none" stroke="#ff0000" stroke-width="1.2"/><path d="M13.2,15.5 L20.8,15.5 M17,11.7 L17,19.3" stroke="#ff0000" stroke-width="1"/></svg>
<svg style="left:38px;top:649px" width="32" height="32" viewBox="0 0 32 32" ><path d="M15.5,4 L15.5,27" stroke="#111" stroke-width="1.3"/><circle cx="15.5" cy="15.5" r="3.8" fill="none" stroke="#ff0000" stroke-width="1.2"/><path d="M11.7,15.5 L19.3,15.5 M15.5,11.7 L15.5,19.3" stroke="#ff0000" stroke-width="1"/></svg>
<svg style="left:3px;top:684px" width="32" height="32" viewBox="0 0 32 32" ><path d="M7,25 L26,14" stroke="#111" stroke-width="1.3"/><g stroke="#888" stroke-width="1"><path d="M8,5 L9,8 M13,4 L13.5,7 M18,5 L17,8 M22,8 L20.5,10.5 M26,18 L23,19 M27,24 L24,24"/></g><circle cx="7.5" cy="25" r="3.5" fill="none" stroke="#ff0000" stroke-width="1.2"/><path d="M4.0,25 L11.0,25 M7.5,21.5 L7.5,28.5" stroke="#ff0000" stroke-width="1"/></svg>
<svg style="left:4px;top:729px" width="30" height="30" viewBox="0 0 30 30" ><circle cx="10" cy="10" r="3.5" fill="none" stroke="#ff0000" stroke-width="1.2"/><path d="M6.5,10 L13.5,10 M10,6.5 L10,13.5" stroke="#ff0000" stroke-width="1"/><path d="M11,12 L11,25 L14,22 L16.5,27.5 L18.5,26.5 L16,21.5 L20,21.5 Z" fill="#fff" stroke="#333" stroke-width="1"/></svg>
<svg style="left:38px;top:729px" width="32" height="32" viewBox="0 0 32 32" ><g transform="translate(6,4)"><ellipse cx="3.5" cy="4" rx="3" ry="3.6" fill="none" stroke="#000" stroke-width="1.6"/><path d="M6.5,4 L17,4 M15.5,4 L15.5,8 M12.5,4 L12.5,7" stroke="#000" stroke-width="2.2"/></g><circle cx="16" cy="21" r="3.5" fill="none" stroke="#ff0000" stroke-width="1.2"/><path d="M12.5,21 L19.5,21 M16,17.5 L16,24.5" stroke="#ff0000" stroke-width="1"/></svg>
<svg style="left:4px;top:772px" width="30" height="25" viewBox="0 0 30 25" ><g transform="translate(5,9)"><ellipse cx="3.5" cy="4" rx="3" ry="3.6" fill="none" stroke="#000" stroke-width="1.6"/><path d="M6.5,4 L17,4 M15.5,4 L15.5,8 M12.5,4 L12.5,7" stroke="#000" stroke-width="2.2"/></g></svg>
<div id="tabbar" class="a"></div>
<svg style="left:77px;top:114px" width="12" height="12" viewBox="0 0 12 12" ><path d="M1.5,1.5 L10.5,10.5 M10.5,1.5 L1.5,10.5" stroke="#5a5a5a" stroke-width="1.1"/></svg>
<svg style="left:95px;top:112px" width="15" height="15" viewBox="0 0 15 15" ><circle cx="7" cy="6.6" r="5.4" fill="#f4f4f4" stroke="#2c4488" stroke-width="2.3"/><path d="M4.5,4.5 L4.5,9 M3,7 L7,7" stroke="#aaa" stroke-width="0.5"/><path d="M7,4 L9.5,3.5 M5,9.5 L7,9" stroke="#e06060" stroke-width="0.6"/><path d="M7.5,7 L11.5,11.2" stroke="#f0a820" stroke-width="2"/><circle cx="12.3" cy="12" r="1.2" fill="#e06060"/></svg>
<span class="t" style="left:592px;top:115px;font-size:11.5px;letter-spacing:0.2px;color:#1a1a1a">* birdhouse.dxf</span>
<div id="hruler" class="a"></div><div id="vruler" class="a"></div>
<svg style="left:0px;top:0px" width="1500" height="844" viewBox="0 0 1500 844" style="left:0;top:0"><path d="M97.78,148 L97.78,155" stroke="#555" stroke-width="1"/><path d="M120.51,148 L120.51,155" stroke="#555" stroke-width="1"/><path d="M143.24,148 L143.24,155" stroke="#555" stroke-width="1"/><path d="M165.97,148 L165.97,155" stroke="#555" stroke-width="1"/><path d="M188.69,148 L188.69,155" stroke="#555" stroke-width="1"/><path d="M211.42,148 L211.42,155" stroke="#555" stroke-width="1"/><path d="M234.15,148 L234.15,155" stroke="#555" stroke-width="1"/><path d="M256.87,148 L256.87,155" stroke="#555" stroke-width="1"/><path d="M279.60,148 L279.60,155" stroke="#555" stroke-width="1"/><path d="M302.33,148 L302.33,155" stroke="#555" stroke-width="1"/><path d="M325.05,148 L325.05,155" stroke="#555" stroke-width="1"/><path d="M347.78,148 L347.78,155" stroke="#555" stroke-width="1"/><path d="M370.51,148 L370.51,155" stroke="#555" stroke-width="1"/><path d="M393.24,148 L393.24,155" stroke="#555" stroke-width="1"/><path d="M415.96,148 L415.96,155" stroke="#555" stroke-width="1"/><path d="M438.69,148 L438.69,155" stroke="#555" stroke-width="1"/><path d="M461.42,148 L461.42,155" stroke="#555" stroke-width="1"/><path d="M484.14,148 L484.14,155" stroke="#555" stroke-width="1"/><path d="M506.87,148 L506.87,155" stroke="#555" stroke-width="1"/><path d="M529.60,148 L529.60,155" stroke="#555" stroke-width="1"/><path d="M552.32,148 L552.32,155" stroke="#555" stroke-width="1"/><path d="M575.05,148 L575.05,155" stroke="#555" stroke-width="1"/><path d="M597.78,148 L597.78,155" stroke="#555" stroke-width="1"/><path d="M620.50,148 L620.50,155" stroke="#555" stroke-width="1"/><path d="M643.23,148 L643.23,155" stroke="#555" stroke-width="1"/><path d="M665.96,148 L665.96,155" stroke="#555" stroke-width="1"/><path d="M688.69,148 L688.69,155" stroke="#555" stroke-width="1"/><path d="M711.41,148 L711.41,155" stroke="#555" stroke-width="1"/><path d="M734.14,148 L734.14,155" stroke="#555" stroke-width="1"/><path d="M756.87,148 L756.87,155" stroke="#555" stroke-width="1"/><path d="M779.59,148 L779.59,155" stroke="#555" stroke-width="1"/><path d="M802.32,148 L802.32,155" stroke="#555" stroke-width="1"/><path d="M825.05,148 L825.05,155" stroke="#555" stroke-width="1"/><path d="M847.77,148 L847.77,155" stroke="#555" stroke-width="1"/><path d="M870.50,148 L870.50,155" stroke="#555" stroke-width="1"/><path d="M893.23,148 L893.23,155" stroke="#555" stroke-width="1"/><path d="M915.96,148 L915.96,155" stroke="#555" stroke-width="1"/><path d="M938.68,148 L938.68,155" stroke="#555" stroke-width="1"/><path d="M961.41,148 L961.41,155" stroke="#555" stroke-width="1"/><path d="M984.14,148 L984.14,155" stroke="#555" stroke-width="1"/><path d="M1006.86,148 L1006.86,155" stroke="#555" stroke-width="1"/><path d="M1029.59,148 L1029.59,155" stroke="#555" stroke-width="1"/><path d="M1052.32,148 L1052.32,155" stroke="#555" stroke-width="1"/><path d="M1075.05,148 L1075.05,155" stroke="#555" stroke-width="1"/><path d="M1097.77,148 L1097.77,155" stroke="#555" stroke-width="1"/><path d="M1120.50,148 L1120.50,155" stroke="#555" stroke-width="1"/></svg>
<div class="a" style="left:95px;top:132px;width:1045px;height:16px;overflow:hidden"><span class="rl" style="left:-27.22px;top:0.5px;width:60px;text-align:center">-80</span><span class="rl" style="left:-4.49px;top:0.5px;width:60px;text-align:center">-70</span><span class="rl" style="left:18.24px;top:0.5px;width:60px;text-align:center">-60</span><span class="rl" style="left:40.97px;top:0.5px;width:60px;text-align:center">-50</span><span class="rl" style="left:63.69px;top:0.5px;width:60px;text-align:center">-40</span><span class="rl" style="left:86.42px;top:0.5px;width:60px;text-align:center">-30</span><span class="rl" style="left:109.15px;top:0.5px;width:60px;text-align:center">-20</span><span class="rl" style="left:131.87px;top:0.5px;width:60px;text-align:center">-10</span><span class="rl" style="left:154.60px;top:0.5px;width:60px;text-align:center">0</span><span class="rl" style="left:177.33px;top:0.5px;width:60px;text-align:center">10</span><span class="rl" style="left:200.05px;top:0.5px;width:60px;text-align:center">20</span><span class="rl" style="left:222.78px;top:0.5px;width:60px;text-align:center">30</span><span class="rl" style="left:245.51px;top:0.5px;width:60px;text-align:center">40</span><span class="rl" style="left:268.24px;top:0.5px;width:60px;text-align:center">50</span><span class="rl" style="left:290.96px;top:0.5px;width:60px;text-align:center">60</span><span class="rl" style="left:313.69px;top:0.5px;width:60px;text-align:center">70</span><span class="rl" style="left:336.42px;top:0.5px;width:60px;text-align:center">80</span><span class="rl" style="left:359.14px;top:0.5px;width:60px;text-align:center">90</span><span class="rl" style="left:381.87px;top:0.5px;width:60px;text-align:center">100</span><span class="rl" style="left:404.60px;top:0.5px;width:60px;text-align:center">110</span><span class="rl" style="left:427.32px;top:0.5px;width:60px;text-align:center">120</span><span class="rl" style="left:450.05px;top:0.5px;width:60px;text-align:center">130</span><span class="rl" style="left:472.78px;top:0.5px;width:60px;text-align:center">140</span><span class="rl" style="left:495.50px;top:0.5px;width:60px;text-align:center">150</span><span class="rl" style="left:518.23px;top:0.5px;width:60px;text-align:center">160</span><span class="rl" style="left:540.96px;top:0.5px;width:60px;text-align:center">170</span><span class="rl" style="left:563.69px;top:0.5px;width:60px;text-align:center">180</span><span class="rl" style="left:586.41px;top:0.5px;width:60px;text-align:center">190</span><span class="rl" style="left:609.14px;top:0.5px;width:60px;text-align:center">200</span><span class="rl" style="left:631.87px;top:0.5px;width:60px;text-align:center">210</span><span class="rl" style="left:654.59px;top:0.5px;width:60px;text-align:center">220</span><span class="rl" style="left:677.32px;top:0.5px;width:60px;text-align:center">230</span><span class="rl" style="left:700.05px;top:0.5px;width:60px;text-align:center">240</span><span class="rl" style="left:722.77px;top:0.5px;width:60px;text-align:center">250</span><span class="rl" style="left:745.50px;top:0.5px;width:60px;text-align:center">260</span><span class="rl" style="left:768.23px;top:0.5px;width:60px;text-align:center">270</span><span class="rl" style="left:790.96px;top:0.5px;width:60px;text-align:center">280</span><span class="rl" style="left:813.68px;top:0.5px;width:60px;text-align:center">290</span><span class="rl" style="left:836.41px;top:0.5px;width:60px;text-align:center">300</span><span class="rl" style="left:859.14px;top:0.5px;width:60px;text-align:center">310</span><span class="rl" style="left:881.86px;top:0.5px;width:60px;text-align:center">320</span><span class="rl" style="left:904.59px;top:0.5px;width:60px;text-align:center">330</span><span class="rl" style="left:927.32px;top:0.5px;width:60px;text-align:center">340</span><span class="rl" style="left:950.05px;top:0.5px;width:60px;text-align:center">350</span><span class="rl" style="left:972.77px;top:0.5px;width:60px;text-align:center">360</span><span class="rl" style="left:995.50px;top:0.5px;width:60px;text-align:center">370</span><span class="rl" style="left:1018.23px;top:0.5px;width:60px;text-align:center">380</span></div>
<svg style="left:0px;top:0px" width="1500" height="844" viewBox="0 0 1500 844" ><path d="M88,727.35 L95,727.35" stroke="#555" stroke-width="1"/><path d="M88,704.63 L95,704.63" stroke="#555" stroke-width="1"/><path d="M88,681.90 L95,681.90" stroke="#555" stroke-width="1"/><path d="M88,659.17 L95,659.17" stroke="#555" stroke-width="1"/><path d="M88,636.45 L95,636.45" stroke="#555" stroke-width="1"/><path d="M88,613.72 L95,613.72" stroke="#555" stroke-width="1"/><path d="M88,590.99 L95,590.99" stroke="#555" stroke-width="1"/><path d="M88,568.26 L95,568.26" stroke="#555" stroke-width="1"/><path d="M88,545.54 L95,545.54" stroke="#555" stroke-width="1"/><path d="M88,522.81 L95,522.81" stroke="#555" stroke-width="1"/><path d="M88,500.08 L95,500.08" stroke="#555" stroke-width="1"/><path d="M88,477.36 L95,477.36" stroke="#555" stroke-width="1"/><path d="M88,454.63 L95,454.63" stroke="#555" stroke-width="1"/><path d="M88,431.90 L95,431.90" stroke="#555" stroke-width="1"/><path d="M88,409.18 L95,409.18" stroke="#555" stroke-width="1"/><path d="M88,386.45 L95,386.45" stroke="#555" stroke-width="1"/><path d="M88,363.72 L95,363.72" stroke="#555" stroke-width="1"/><path d="M88,341.00 L95,341.00" stroke="#555" stroke-width="1"/><path d="M88,318.27 L95,318.27" stroke="#555" stroke-width="1"/><path d="M88,295.54 L95,295.54" stroke="#555" stroke-width="1"/><path d="M88,272.81 L95,272.81" stroke="#555" stroke-width="1"/><path d="M88,250.09 L95,250.09" stroke="#555" stroke-width="1"/><path d="M88,227.36 L95,227.36" stroke="#555" stroke-width="1"/><path d="M88,204.63 L95,204.63" stroke="#555" stroke-width="1"/><path d="M88,181.91 L95,181.91" stroke="#555" stroke-width="1"/><path d="M88,159.18 L95,159.18" stroke="#555" stroke-width="1"/></svg>
<svg style="left:432.5px;top:145px" width="12" height="10" viewBox="0 0 12 10" ><path d="M0.5,0.3 L11.5,0.3 L6,5.6 Z" fill="#000"/><path d="M6,5 L6,10" stroke="#555" stroke-width="1"/></svg>
<svg style="left:84.5px;top:426px" width="11" height="13" viewBox="0 0 11 13" ><path d="M0.4,0.5 L0.4,12.5 L6.5,6.5 Z" fill="#000"/><path d="M6,6.5 L11,6.5" stroke="#555" stroke-width="1"/></svg>
<div class="a" style="left:72px;top:155px;width:16px;height:577px;overflow:hidden"><span class="rl" style="left:-22px;top:590.08px;width:60px;text-align:center;transform:rotate(-90deg);transform-origin:30px 5px;left:-24.3px">-30</span><span class="rl" style="left:-22px;top:567.35px;width:60px;text-align:center;transform:rotate(-90deg);transform-origin:30px 5px;left:-24.3px">-20</span><span class="rl" style="left:-22px;top:544.63px;width:60px;text-align:center;transform:rotate(-90deg);transform-origin:30px 5px;left:-24.3px">-10</span><span class="rl" style="left:-22px;top:521.90px;width:60px;text-align:center;transform:rotate(-90deg);transform-origin:30px 5px;left:-24.3px">0</span><span class="rl" style="left:-22px;top:499.17px;width:60px;text-align:center;transform:rotate(-90deg);transform-origin:30px 5px;left:-24.3px">10</span><span class="rl" style="left:-22px;top:476.45px;width:60px;text-align:center;transform:rotate(-90deg);transform-origin:30px 5px;left:-24.3px">20</span><span class="rl" style="left:-22px;top:453.72px;width:60px;text-align:center;transform:rotate(-90deg);transform-origin:30px 5px;left:-24.3px">30</span><span class="rl" style="left:-22px;top:430.99px;width:60px;text-align:center;transform:rotate(-90deg);transform-origin:30px 5px;left:-24.3px">40</span><span class="rl" style="left:-22px;top:408.26px;width:60px;text-align:center;transform:rotate(-90deg);transform-origin:30px 5px;left:-24.3px">50</span><span class="rl" style="left:-22px;top:385.54px;width:60px;text-align:center;transform:rotate(-90deg);transform-origin:30px 5px;left:-24.3px">60</span><span class="rl" style="left:-22px;top:362.81px;width:60px;text-align:center;transform:rotate(-90deg);transform-origin:30px 5px;left:-24.3px">70</span><span class="rl" style="left:-22px;top:340.08px;width:60px;text-align:center;transform:rotate(-90deg);transform-origin:30px 5px;left:-24.3px">80</span><span class="rl" style="left:-22px;top:317.36px;width:60px;text-align:center;transform:rotate(-90deg);transform-origin:30px 5px;left:-24.3px">90</span><span class="rl" style="left:-22px;top:294.63px;width:60px;text-align:center;transform:rotate(-90deg);transform-origin:30px 5px;left:-24.3px">100</span><span class="rl" style="left:-22px;top:271.90px;width:60px;text-align:center;transform:rotate(-90deg);transform-origin:30px 5px;left:-24.3px">110</span><span class="rl" style="left:-22px;top:249.18px;width:60px;text-align:center;transform:rotate(-90deg);transform-origin:30px 5px;left:-24.3px">120</span><span class="rl" style="left:-22px;top:226.45px;width:60px;text-align:center;transform:rotate(-90deg);transform-origin:30px 5px;left:-24.3px">130</span><span class="rl" style="left:-22px;top:203.72px;width:60px;text-align:center;transform:rotate(-90deg);transform-origin:30px 5px;left:-24.3px">140</span><span class="rl" style="left:-22px;top:181.00px;width:60px;text-align:center;transform:rotate(-90deg);transform-origin:30px 5px;left:-24.3px">150</span><span class="rl" style="left:-22px;top:158.27px;width:60px;text-align:center;transform:rotate(-90deg);transform-origin:30px 5px;left:-24.3px">160</span><span class="rl" style="left:-22px;top:135.54px;width:60px;text-align:center;transform:rotate(-90deg);transform-origin:30px 5px;left:-24.3px">170</span><span class="rl" style="left:-22px;top:112.81px;width:60px;text-align:center;transform:rotate(-90deg);transform-origin:30px 5px;left:-24.3px">180</span><span class="rl" style="left:-22px;top:90.09px;width:60px;text-align:center;transform:rotate(-90deg);transform-origin:30px 5px;left:-24.3px">190</span><span class="rl" style="left:-22px;top:67.36px;width:60px;text-align:center;transform:rotate(-90deg);transform-origin:30px 5px;left:-24.3px">200</span><span class="rl" style="left:-22px;top:44.63px;width:60px;text-align:center;transform:rotate(-90deg);transform-origin:30px 5px;left:-24.3px">210</span><span class="rl" style="left:-22px;top:21.91px;width:60px;text-align:center;transform:rotate(-90deg);transform-origin:30px 5px;left:-24.3px">220</span><span class="rl" style="left:-22px;top:-0.82px;width:60px;text-align:center;transform:rotate(-90deg);transform-origin:30px 5px;left:-24.3px">230</span></div>
<svg style="left:95px;top:155px" width="1045" height="577" viewBox="95 155 1045 577" ><rect x="95" y="155" width="1045" height="577" fill="#d3d3d3"/><path d="M97.2,726.8h1.2v1.2h-1.2zM97.2,704.0h1.2v1.2h-1.2zM97.2,681.3h1.2v1.2h-1.2zM97.2,658.6h1.2v1.2h-1.2zM97.2,635.8h1.2v1.2h-1.2zM97.2,613.1h1.2v1.2h-1.2zM97.2,590.4h1.2v1.2h-1.2zM97.2,567.7h1.2v1.2h-1.2zM97.2,544.9h1.2v1.2h-1.2zM97.2,522.2h1.2v1.2h-1.2zM97.2,499.5h1.2v1.2h-1.2zM97.2,476.8h1.2v1.2h-1.2zM97.2,454.0h1.2v1.2h-1.2zM97.2,431.3h1.2v1.2h-1.2zM97.2,408.6h1.2v1.2h-1.2zM97.2,385.8h1.2v1.2h-1.2zM97.2,363.1h1.2v1.2h-1.2zM97.2,340.4h1.2v1.2h-1.2zM97.2,317.7h1.2v1.2h-1.2zM97.2,294.9h1.2v1.2h-1.2zM97.2,272.2h1.2v1.2h-1.2zM97.2,249.5h1.2v1.2h-1.2zM97.2,226.8h1.2v1.2h-1.2zM97.2,204.0h1.2v1.2h-1.2zM97.2,181.3h1.2v1.2h-1.2zM119.9,726.8h1.2v1.2h-1.2zM119.9,704.0h1.2v1.2h-1.2zM119.9,681.3h1.2v1.2h-1.2zM119.9,658.6h1.2v1.2h-1.2zM119.9,635.8h1.2v1.2h-1.2zM119.9,613.1h1.2v1.2h-1.2zM119.9,590.4h1.2v1.2h-1.2zM119.9,567.7h1.2v1.2h-1.2zM119.9,544.9h1.2v1.2h-1.2zM119.9,522.2h1.2v1.2h-1.2zM119.9,499.5h1.2v1.2h-1.2zM119.9,476.8h1.2v1.2h-1.2zM119.9,454.0h1.2v1.2h-1.2zM119.9,431.3h1.2v1.2h-1.2zM119.9,408.6h1.2v1.2h-1.2zM119.9,385.8h1.2v1.2h-1.2zM119.9,363.1h1.2v1.2h-1.2zM119.9,340.4h1.2v1.2h-1.2zM119.9,317.7h1.2v1.2h-1.2zM119.9,294.9h1.2v1.2h-1.2zM119.9,272.2h1.2v1.2h-1.2zM119.9,249.5h1.2v1.2h-1.2zM119.9,226.8h1.2v1.2h-1.2zM119.9,204.0h1.2v1.2h-1.2zM119.9,181.3h1.2v1.2h-1.2zM142.6,726.8h1.2v1.2h-1.2zM142.6,704.0h1.2v1.2h-1.2zM142.6,681.3h1.2v1.2h-1.2zM142.6,658.6h1.2v1.2h-1.2zM142.6,635.8h1.2v1.2h-1.2zM142.6,613.1h1.2v1.2h-1.2zM142.6,590.4h1.2v1.2h-1.2zM142.6,567.7h1.2v1.2h-1.2zM142.6,544.9h1.2v1.2h-1.2zM142.6,522.2h1.2v1.2h-1.2zM142.6,499.5h1.2v1.2h-1.2zM142.6,476.8h1.2v1.2h-1.2zM142.6,454.0h1.2v1.2h-1.2zM142.6,431.3h1.2v1.2h-1.2zM142.6,408.6h1.2v1.2h-1.2zM142.6,385.8h1.2v1.2h-1.2zM142.6,363.1h1.2v1.2h-1.2zM142.6,340.4h1.2v1.2h-1.2zM142.6,317.7h1.2v1.2h-1.2zM142.6,294.9h1.2v1.2h-1.2zM142.6,272.2h1.2v1.2h-1.2zM142.6,249.5h1.2v1.2h-1.2zM142.6,226.8h1.2v1.2h-1.2zM142.6,204.0h1.2v1.2h-1.2zM142.6,181.3h1.2v1.2h-1.2zM165.4,726.8h1.2v1.2h-1.2zM165.4,704.0h1.2v1.2h-1.2zM165.4,681.3h1.2v1.2h-1.2zM165.4,658.6h1.2v1.2h-1.2zM165.4,635.8h1.2v1.2h-1.2zM165.4,613.1h1.2v1.2h-1.2zM165.4,590.4h1.2v1.2h-1.2zM165.4,567.7h1.2v1.2h-1.2zM165.4,544.9h1.2v1.2h-1.2zM165.4,522.2h1.2v1.2h-1.2zM165.4,499.5h1.2v1.2h-1.2zM165.4,476.8h1.2v1.2h-1.2zM165.4,454.0h1.2v1.2h-1.2zM165.4,431.3h1.2v1.2h-1.2zM165.4,408.6h1.2v1.2h-1.2zM165.4,385.8h1.2v1.2h-1.2zM165.4,363.1h1.2v1.2h-1.2zM165.4,340.4h1.2v1.2h-1.2zM165.4,317.7h1.2v1.2h-1.2zM165.4,294.9h1.2v1.2h-1.2zM165.4,272.2h1.2v1.2h-1.2zM165.4,249.5h1.2v1.2h-1.2zM165.4,226.8h1.2v1.2h-1.2zM165.4,204.0h1.2v1.2h-1.2zM165.4,181.3h1.2v1.2h-1.2zM188.1,726.8h1.2v1.2h-1.2zM188.1,704.0h1.2v1.2h-1.2zM188.1,681.3h1.2v1.2h-1.2zM188.1,658.6h1.2v1.2h-1.2zM188.1,635.8h1.2v1.2h-1.2zM188.1,613.1h1.2v1.2h-1.2zM188.1,590.4h1.2v1.2h-1.2zM188.1,567.7h1.2v1.2h-1.2zM188.1,544.9h1.2v1.2h-1.2zM188.1,522.2h1.2v1.2h-1.2zM188.1,499.5h1.2v1.2h-1.2zM188.1,476.8h1.2v1.2h-1.2zM188.1,454.0h1.2v1.2h-1.2zM188.1,431.3h1.2v1.2h-1.2zM188.1,408.6h1.2v1.2h-1.2zM188.1,385.8h1.2v1.2h-1.2zM188.1,363.1h1.2v1.2h-1.2zM188.1,340.4h1.2v1.2h-1.2zM188.1,317.7h1.2v1.2h-1.2zM188.1,294.9h1.2v1.2h-1.2zM188.1,272.2h1.2v1.2h-1.2zM188.1,249.5h1.2v1.2h-1.2zM188.1,226.8h1.2v1.2h-1.2zM188.1,204.0h1.2v1.2h-1.2zM188.1,181.3h1.2v1.2h-1.2zM210.8,726.8h1.2v1.2h-1.2zM210.8,704.0h1.2v1.2h-1.2zM210.8,681.3h1.2v1.2h-1.2zM210.8,658.6h1.2v1.2h-1.2zM210.8,635.8h1.2v1.2h-1.2zM210.8,613.1h1.2v1.2h-1.2zM210.8,590.4h1.2v1.2h-1.2zM210.8,567.7h1.2v1.2h-1.2zM210.8,544.9h1.2v1.2h-1.2zM210.8,522.2h1.2v1.2h-1.2zM210.8,499.5h1.2v1.2h-1.2zM210.8,476.8h1.2v1.2h-1.2zM210.8,454.0h1.2v1.2h-1.2zM210.8,431.3h1.2v1.2h-1.2zM210.8,408.6h1.2v1.2h-1.2zM210.8,385.8h1.2v1.2h-1.2zM210.8,363.1h1.2v1.2h-1.2zM210.8,340.4h1.2v1.2h-1.2zM210.8,317.7h1.2v1.2h-1.2zM210.8,294.9h1.2v1.2h-1.2zM210.8,272.2h1.2v1.2h-1.2zM210.8,249.5h1.2v1.2h-1.2zM210.8,226.8h1.2v1.2h-1.2zM210.8,204.0h1.2v1.2h-1.2zM210.8,181.3h1.2v1.2h-1.2zM233.5,726.8h1.2v1.2h-1.2zM233.5,704.0h1.2v1.2h-1.2zM233.5,681.3h1.2v1.2h-1.2zM233.5,658.6h1.2v1.2h-1.2zM233.5,635.8h1.2v1.2h-1.2zM233.5,613.1h1.2v1.2h-1.2zM233.5,590.4h1.2v1.2h-1.2zM233.5,567.7h1.2v1.2h-1.2zM233.5,544.9h1.2v1.2h-1.2zM233.5,522.2h1.2v1.2h-1.2zM233.5,499.5h1.2v1.2h-1.2zM233.5,476.8h1.2v1.2h-1.2zM233.5,454.0h1.2v1.2h-1.2zM233.5,431.3h1.2v1.2h-1.2zM233.5,408.6h1.2v1.2h-1.2zM233.5,385.8h1.2v1.2h-1.2zM233.5,363.1h1.2v1.2h-1.2zM233.5,340.4h1.2v1.2h-1.2zM233.5,317.7h1.2v1.2h-1.2zM233.5,294.9h1.2v1.2h-1.2zM233.5,272.2h1.2v1.2h-1.2zM233.5,249.5h1.2v1.2h-1.2zM233.5,226.8h1.2v1.2h-1.2zM233.5,204.0h1.2v1.2h-1.2zM233.5,181.3h1.2v1.2h-1.2zM256.3,726.8h1.2v1.2h-1.2zM256.3,704.0h1.2v1.2h-1.2zM256.3,681.3h1.2v1.2h-1.2zM256.3,658.6h1.2v1.2h-1.2zM256.3,635.8h1.2v1.2h-1.2zM256.3,613.1h1.2v1.2h-1.2zM256.3,590.4h1.2v1.2h-1.2zM256.3,567.7h1.2v1.2h-1.2zM256.3,544.9h1.2v1.2h-1.2zM256.3,522.2h1.2v1.2h-1.2zM256.3,499.5h1.2v1.2h-1.2zM256.3,476.8h1.2v1.2h-1.2zM256.3,454.0h1.2v1.2h-1.2zM256.3,431.3h1.2v1.2h-1.2zM256.3,408.6h1.2v1.2h-1.2zM256.3,385.8h1.2v1.2h-1.2zM256.3,363.1h1.2v1.2h-1.2zM256.3,340.4h1.2v1.2h-1.2zM256.3,317.7h1.2v1.2h-1.2zM256.3,294.9h1.2v1.2h-1.2zM256.3,272.2h1.2v1.2h-1.2zM256.3,249.5h1.2v1.2h-1.2zM256.3,226.8h1.2v1.2h-1.2zM256.3,204.0h1.2v1.2h-1.2zM256.3,181.3h1.2v1.2h-1.2zM279.0,726.8h1.2v1.2h-1.2zM279.0,704.0h1.2v1.2h-1.2zM279.0,681.3h1.2v1.2h-1.2zM279.0,658.6h1.2v1.2h-1.2zM279.0,635.8h1.2v1.2h-1.2zM279.0,613.1h1.2v1.2h-1.2zM279.0,590.4h1.2v1.2h-1.2zM279.0,567.7h1.2v1.2h-1.2zM279.0,544.9h1.2v1.2h-1.2zM279.0,522.2h1.2v1.2h-1.2zM279.0,499.5h1.2v1.2h-1.2zM279.0,476.8h1.2v1.2h-1.2zM279.0,454.0h1.2v1.2h-1.2zM279.0,431.3h1.2v1.2h-1.2zM279.0,408.6h1.2v1.2h-1.2zM279.0,385.8h1.2v1.2h-1.2zM279.0,363.1h1.2v1.2h-1.2zM279.0,340.4h1.2v1.2h-1.2zM279.0,317.7h1.2v1.2h-1.2zM279.0,294.9h1.2v1.2h-1.2zM279.0,272.2h1.2v1.2h-1.2zM279.0,249.5h1.2v1.2h-1.2zM279.0,226.8h1.2v1.2h-1.2zM279.0,204.0h1.2v1.2h-1.2zM279.0,181.3h1.2v1.2h-1.2zM301.7,726.8h1.2v1.2h-1.2zM301.7,704.0h1.2v1.2h-1.2zM301.7,681.3h1.2v1.2h-1.2zM301.7,658.6h1.2v1.2h-1.2zM301.7,635.8h1.2v1.2h-1.2zM301.7,613.1h1.2v1.2h-1.2zM301.7,590.4h1.2v1.2h-1.2zM301.7,567.7h1.2v1.2h-1.2zM301.7,544.9h1.2v1.2h-1.2zM301.7,522.2h1.2v1.2h-1.2zM301.7,499.5h1.2v1.2h-1.2zM301.7,476.8h1.2v1.2h-1.2zM301.7,454.0h1.2v1.2h-1.2zM301.7,431.3h1.2v1.2h-1.2zM301.7,408.6h1.2v1.2h-1.2zM301.7,385.8h1.2v1.2h-1.2zM301.7,363.1h1.2v1.2h-1.2zM301.7,340.4h1.2v1.2h-1.2zM301.7,317.7h1.2v1.2h-1.2zM301.7,294.9h1.2v1.2h-1.2zM301.7,272.2h1.2v1.2h-1.2zM301.7,249.5h1.2v1.2h-1.2zM301.7,226.8h1.2v1.2h-1.2zM301.7,204.0h1.2v1.2h-1.2zM301.7,181.3h1.2v1.2h-1.2zM324.5,726.8h1.2v1.2h-1.2zM324.5,704.0h1.2v1.2h-1.2zM324.5,681.3h1.2v1.2h-1.2zM324.5,658.6h1.2v1.2h-1.2zM324.5,635.8h1.2v1.2h-1.2zM324.5,613.1h1.2v1.2h-1.2zM324.5,590.4h1.2v1.2h-1.2zM324.5,567.7h1.2v1.2h-1.2zM324.5,544.9h1.2v1.2h-1.2zM324.5,522.2h1.2v1.2h-1.2zM324.5,499.5h1.2v1.2h-1.2zM324.5,476.8h1.2v1.2h-1.2zM324.5,454.0h1.2v1.2h-1.2zM324.5,431.3h1.2v1.2h-1.2zM324.5,408.6h1.2v1.2h-1.2zM324.5,385.8h1.2v1.2h-1.2zM324.5,363.1h1.2v1.2h-1.2zM324.5,340.4h1.2v1.2h-1.2zM324.5,317.7h1.2v1.2h-1.2zM324.5,294.9h1.2v1.2h-1.2zM324.5,272.2h1.2v1.2h-1.2zM324.5,249.5h1.2v1.2h-1.2zM324.5,226.8h1.2v1.2h-1.2zM324.5,204.0h1.2v1.2h-1.2zM324.5,181.3h1.2v1.2h-1.2zM347.2,726.8h1.2v1.2h-1.2zM347.2,704.0h1.2v1.2h-1.2zM347.2,681.3h1.2v1.2h-1.2zM347.2,658.6h1.2v1.2h-1.2zM347.2,635.8h1.2v1.2h-1.2zM347.2,613.1h1.2v1.2h-1.2zM347.2,590.4h1.2v1.2h-1.2zM347.2,567.7h1.2v1.2h-1.2zM347.2,544.9h1.2v1.2h-1.2zM347.2,522.2h1.2v1.2h-1.2zM347.2,499.5h1.2v1.2h-1.2zM347.2,476.8h1.2v1.2h-1.2zM347.2,454.0h1.2v1.2h-1.2zM347.2,431.3h1.2v1.2h-1.2zM347.2,408.6h1.2v1.2h-1.2zM347.2,385.8h1.2v1.2h-1.2zM347.2,363.1h1.2v1.2h-1.2zM347.2,340.4h1.2v1.2h-1.2zM347.2,317.7h1.2v1.2h-1.2zM347.2,294.9h1.2v1.2h-1.2zM347.2,272.2h1.2v1.2h-1.2zM347.2,249.5h1.2v1.2h-1.2zM347.2,226.8h1.2v1.2h-1.2zM347.2,204.0h1.2v1.2h-1.2zM347.2,181.3h1.2v1.2h-1.2zM369.9,726.8h1.2v1.2h-1.2zM369.9,704.0h1.2v1.2h-1.2zM369.9,681.3h1.2v1.2h-1.2zM369.9,658.6h1.2v1.2h-1.2zM369.9,635.8h1.2v1.2h-1.2zM369.9,613.1h1.2v1.2h-1.2zM369.9,590.4h1.2v1.2h-1.2zM369.9,567.7h1.2v1.2h-1.2zM369.9,544.9h1.2v1.2h-1.2zM369.9,522.2h1.2v1.2h-1.2zM369.9,499.5h1.2v1.2h-1.2zM369.9,476.8h1.2v1.2h-1.2zM369.9,454.0h1.2v1.2h-1.2zM369.9,431.3h1.2v1.2h-1.2zM369.9,408.6h1.2v1.2h-1.2zM369.9,385.8h1.2v1.2h-1.2zM369.9,363.1h1.2v1.2h-1.2zM369.9,340.4h1.2v1.2h-1.2zM369.9,317.7h1.2v1.2h-1.2zM369.9,294.9h1.2v1.2h-1.2zM369.9,272.2h1.2v1.2h-1.2zM369.9,249.5h1.2v1.2h-1.2zM369.9,226.8h1.2v1.2h-1.2zM369.9,204.0h1.2v1.2h-1.2zM369.9,181.3h1.2v1.2h-1.2zM392.6,726.8h1.2v1.2h-1.2zM392.6,704.0h1.2v1.2h-1.2zM392.6,681.3h1.2v1.2h-1.2zM392.6,658.6h1.2v1.2h-1.2zM392.6,635.8h1.2v1.2h-1.2zM392.6,613.1h1.2v1.2h-1.2zM392.6,590.4h1.2v1.2h-1.2zM392.6,567.7h1.2v1.2h-1.2zM392.6,544.9h1.2v1.2h-1.2zM392.6,522.2h1.2v1.2h-1.2zM392.6,499.5h1.2v1.2h-1.2zM392.6,476.8h1.2v1.2h-1.2zM392.6,454.0h1.2v1.2h-1.2zM392.6,431.3h1.2v1.2h-1.2zM392.6,408.6h1.2v1.2h-1.2zM392.6,385.8h1.2v1.2h-1.2zM392.6,363.1h1.2v1.2h-1.2zM392.6,340.4h1.2v1.2h-1.2zM392.6,317.7h1.2v1.2h-1.2zM392.6,294.9h1.2v1.2h-1.2zM392.6,272.2h1.2v1.2h-1.2zM392.6,249.5h1.2v1.2h-1.2zM392.6,226.8h1.2v1.2h-1.2zM392.6,204.0h1.2v1.2h-1.2zM392.6,181.3h1.2v1.2h-1.2zM415.4,726.8h1.2v1.2h-1.2zM415.4,704.0h1.2v1.2h-1.2zM415.4,681.3h1.2v1.2h-1.2zM415.4,658.6h1.2v1.2h-1.2zM415.4,635.8h1.2v1.2h-1.2zM415.4,613.1h1.2v1.2h-1.2zM415.4,590.4h1.2v1.2h-1.2zM415.4,567.7h1.2v1.2h-1.2zM415.4,544.9h1.2v1.2h-1.2zM415.4,522.2h1.2v1.2h-1.2zM415.4,499.5h1.2v1.2h-1.2zM415.4,476.8h1.2v1.2h-1.2zM415.4,454.0h1.2v1.2h-1.2zM415.4,431.3h1.2v1.2h-1.2zM415.4,408.6h1.2v1.2h-1.2zM415.4,385.8h1.2v1.2h-1.2zM415.4,363.1h1.2v1.2h-1.2zM415.4,340.4h1.2v1.2h-1.2zM415.4,317.7h1.2v1.2h-1.2zM415.4,294.9h1.2v1.2h-1.2zM415.4,272.2h1.2v1.2h-1.2zM415.4,249.5h1.2v1.2h-1.2zM415.4,226.8h1.2v1.2h-1.2zM415.4,204.0h1.2v1.2h-1.2zM415.4,181.3h1.2v1.2h-1.2zM438.1,726.8h1.2v1.2h-1.2zM438.1,704.0h1.2v1.2h-1.2zM438.1,681.3h1.2v1.2h-1.2zM438.1,658.6h1.2v1.2h-1.2zM438.1,635.8h1.2v1.2h-1.2zM438.1,613.1h1.2v1.2h-1.2zM438.1,590.4h1.2v1.2h-1.2zM438.1,567.7h1.2v1.2h-1.2zM438.1,544.9h1.2v1.2h-1.2zM438.1,522.2h1.2v1.2h-1.2zM438.1,499.5h1.2v1.2h-1.2zM438.1,476.8h1.2v1.2h-1.2zM438.1,454.0h1.2v1.2h-1.2zM438.1,431.3h1.2v1.2h-1.2zM438.1,408.6h1.2v1.2h-1.2zM438.1,385.8h1.2v1.2h-1.2zM438.1,363.1h1.2v1.2h-1.2zM438.1,340.4h1.2v1.2h-1.2zM438.1,317.7h1.2v1.2h-1.2zM438.1,294.9h1.2v1.2h-1.2zM438.1,272.2h1.2v1.2h-1.2zM438.1,249.5h1.2v1.2h-1.2zM438.1,226.8h1.2v1.2h-1.2zM438.1,204.0h1.2v1.2h-1.2zM438.1,181.3h1.2v1.2h-1.2zM460.8,726.8h1.2v1.2h-1.2zM460.8,704.0h1.2v1.2h-1.2zM460.8,681.3h1.2v1.2h-1.2zM460.8,658.6h1.2v1.2h-1.2zM460.8,635.8h1.2v1.2h-1.2zM460.8,613.1h1.2v1.2h-1.2zM460.8,590.4h1.2v1.2h-1.2zM460.8,567.7h1.2v1.2h-1.2zM460.8,544.9h1.2v1.2h-1.2zM460.8,522.2h1.2v1.2h-1.2zM460.8,499.5h1.2v1.2h-1.2zM460.8,476.8h1.2v1.2h-1.2zM460.8,454.0h1.2v1.2h-1.2zM460.8,431.3h1.2v1.2h-1.2zM460.8,408.6h1.2v1.2h-1.2zM460.8,385.8h1.2v1.2h-1.2zM460.8,363.1h1.2v1.2h-1.2zM460.8,340.4h1.2v1.2h-1.2zM460.8,317.7h1.2v1.2h-1.2zM460.8,294.9h1.2v1.2h-1.2zM460.8,272.2h1.2v1.2h-1.2zM460.8,249.5h1.2v1.2h-1.2zM460.8,226.8h1.2v1.2h-1.2zM460.8,204.0h1.2v1.2h-1.2zM460.8,181.3h1.2v1.2h-1.2zM483.5,726.8h1.2v1.2h-1.2zM483.5,704.0h1.2v1.2h-1.2zM483.5,681.3h1.2v1.2h-1.2zM483.5,658.6h1.2v1.2h-1.2zM483.5,635.8h1.2v1.2h-1.2zM483.5,613.1h1.2v1.2h-1.2zM483.5,590.4h1.2v1.2h-1.2zM483.5,567.7h1.2v1.2h-1.2zM483.5,544.9h1.2v1.2h-1.2zM483.5,522.2h1.2v1.2h-1.2zM483.5,499.5h1.2v1.2h-1.2zM483.5,476.8h1.2v1.2h-1.2zM483.5,454.0h1.2v1.2h-1.2zM483.5,431.3h1.2v1.2h-1.2zM483.5,408.6h1.2v1.2h-1.2zM483.5,385.8h1.2v1.2h-1.2zM483.5,363.1h1.2v1.2h-1.2zM483.5,340.4h1.2v1.2h-1.2zM483.5,317.7h1.2v1.2h-1.2zM483.5,294.9h1.2v1.2h-1.2zM483.5,272.2h1.2v1.2h-1.2zM483.5,249.5h1.2v1.2h-1.2zM483.5,226.8h1.2v1.2h-1.2zM483.5,204.0h1.2v1.2h-1.2zM483.5,181.3h1.2v1.2h-1.2zM506.3,726.8h1.2v1.2h-1.2zM506.3,704.0h1.2v1.2h-1.2zM506.3,681.3h1.2v1.2h-1.2zM506.3,658.6h1.2v1.2h-1.2zM506.3,635.8h1.2v1.2h-1.2zM506.3,613.1h1.2v1.2h-1.2zM506.3,590.4h1.2v1.2h-1.2zM506.3,567.7h1.2v1.2h-1.2zM506.3,544.9h1.2v1.2h-1.2zM506.3,522.2h1.2v1.2h-1.2zM506.3,499.5h1.2v1.2h-1.2zM506.3,476.8h1.2v1.2h-1.2zM506.3,454.0h1.2v1.2h-1.2zM506.3,431.3h1.2v1.2h-1.2zM506.3,408.6h1.2v1.2h-1.2zM506.3,385.8h1.2v1.2h-1.2zM506.3,363.1h1.2v1.2h-1.2zM506.3,340.4h1.2v1.2h-1.2zM506.3,317.7h1.2v1.2h-1.2zM506.3,294.9h1.2v1.2h-1.2zM506.3,272.2h1.2v1.2h-1.2zM506.3,249.5h1.2v1.2h-1.2zM506.3,226.8h1.2v1.2h-1.2zM506.3,204.0h1.2v1.2h-1.2zM506.3,181.3h1.2v1.2h-1.2zM529.0,726.8h1.2v1.2h-1.2zM529.0,704.0h1.2v1.2h-1.2zM529.0,681.3h1.2v1.2h-1.2zM529.0,658.6h1.2v1.2h-1.2zM529.0,635.8h1.2v1.2h-1.2zM529.0,613.1h1.2v1.2h-1.2zM529.0,590.4h1.2v1.2h-1.2zM529.0,567.7h1.2v1.2h-1.2zM529.0,544.9h1.2v1.2h-1.2zM529.0,522.2h1.2v1.2h-1.2zM529.0,499.5h1.2v1.2h-1.2zM529.0,476.8h1.2v1.2h-1.2zM529.0,454.0h1.2v1.2h-1.2zM529.0,431.3h1.2v1.2h-1.2zM529.0,408.6h1.2v1.2h-1.2zM529.0,385.8h1.2v1.2h-1.2zM529.0,363.1h1.2v1.2h-1.2zM529.0,340.4h1.2v1.2h-1.2zM529.0,317.7h1.2v1.2h-1.2zM529.0,294.9h1.2v1.2h-1.2zM529.0,272.2h1.2v1.2h-1.2zM529.0,249.5h1.2v1.2h-1.2zM529.0,226.8h1.2v1.2h-1.2zM529.0,204.0h1.2v1.2h-1.2zM529.0,181.3h1.2v1.2h-1.2zM551.7,726.8h1.2v1.2h-1.2zM551.7,704.0h1.2v1.2h-1.2zM551.7,681.3h1.2v1.2h-1.2zM551.7,658.6h1.2v1.2h-1.2zM551.7,635.8h1.2v1.2h-1.2zM551.7,613.1h1.2v1.2h-1.2zM551.7,590.4h1.2v1.2h-1.2zM551.7,567.7h1.2v1.2h-1.2zM551.7,544.9h1.2v1.2h-1.2zM551.7,522.2h1.2v1.2h-1.2zM551.7,499.5h1.2v1.2h-1.2zM551.7,476.8h1.2v1.2h-1.2zM551.7,454.0h1.2v1.2h-1.2zM551.7,431.3h1.2v1.2h-1.2zM551.7,408.6h1.2v1.2h-1.2zM551.7,385.8h1.2v1.2h-1.2zM551.7,363.1h1.2v1.2h-1.2zM551.7,340.4h1.2v1.2h-1.2zM551.7,317.7h1.2v1.2h-1.2zM551.7,294.9h1.2v1.2h-1.2zM551.7,272.2h1.2v1.2h-1.2zM551.7,249.5h1.2v1.2h-1.2zM551.7,226.8h1.2v1.2h-1.2zM551.7,204.0h1.2v1.2h-1.2zM551.7,181.3h1.2v1.2h-1.2zM574.5,726.8h1.2v1.2h-1.2zM574.5,704.0h1.2v1.2h-1.2zM574.5,681.3h1.2v1.2h-1.2zM574.5,658.6h1.2v1.2h-1.2zM574.5,635.8h1.2v1.2h-1.2zM574.5,613.1h1.2v1.2h-1.2zM574.5,590.4h1.2v1.2h-1.2zM574.5,567.7h1.2v1.2h-1.2zM574.5,544.9h1.2v1.2h-1.2zM574.5,522.2h1.2v1.2h-1.2zM574.5,499.5h1.2v1.2h-1.2zM574.5,476.8h1.2v1.2h-1.2zM574.5,454.0h1.2v1.2h-1.2zM574.5,431.3h1.2v1.2h-1.2zM574.5,408.6h1.2v1.2h-1.2zM574.5,385.8h1.2v1.2h-1.2zM574.5,363.1h1.2v1.2h-1.2zM574.5,340.4h1.2v1.2h-1.2zM574.5,317.7h1.2v1.2h-1.2zM574.5,294.9h1.2v1.2h-1.2zM574.5,272.2h1.2v1.2h-1.2zM574.5,249.5h1.2v1.2h-1.2zM574.5,226.8h1.2v1.2h-1.2zM574.5,204.0h1.2v1.2h-1.2zM574.5,181.3h1.2v1.2h-1.2zM597.2,726.8h1.2v1.2h-1.2zM597.2,704.0h1.2v1.2h-1.2zM597.2,681.3h1.2v1.2h-1.2zM597.2,658.6h1.2v1.2h-1.2zM597.2,635.8h1.2v1.2h-1.2zM597.2,613.1h1.2v1.2h-1.2zM597.2,590.4h1.2v1.2h-1.2zM597.2,567.7h1.2v1.2h-1.2zM597.2,544.9h1.2v1.2h-1.2zM597.2,522.2h1.2v1.2h-1.2zM597.2,499.5h1.2v1.2h-1.2zM597.2,476.8h1.2v1.2h-1.2zM597.2,454.0h1.2v1.2h-1.2zM597.2,431.3h1.2v1.2h-1.2zM597.2,408.6h1.2v1.2h-1.2zM597.2,385.8h1.2v1.2h-1.2zM597.2,363.1h1.2v1.2h-1.2zM597.2,340.4h1.2v1.2h-1.2zM597.2,317.7h1.2v1.2h-1.2zM597.2,294.9h1.2v1.2h-1.2zM597.2,272.2h1.2v1.2h-1.2zM597.2,249.5h1.2v1.2h-1.2zM597.2,226.8h1.2v1.2h-1.2zM597.2,204.0h1.2v1.2h-1.2zM597.2,181.3h1.2v1.2h-1.2zM619.9,726.8h1.2v1.2h-1.2zM619.9,704.0h1.2v1.2h-1.2zM619.9,681.3h1.2v1.2h-1.2zM619.9,658.6h1.2v1.2h-1.2zM619.9,635.8h1.2v1.2h-1.2zM619.9,613.1h1.2v1.2h-1.2zM619.9,590.4h1.2v1.2h-1.2zM619.9,567.7h1.2v1.2h-1.2zM619.9,544.9h1.2v1.2h-1.2zM619.9,522.2h1.2v1.2h-1.2zM619.9,499.5h1.2v1.2h-1.2zM619.9,476.8h1.2v1.2h-1.2zM619.9,454.0h1.2v1.2h-1.2zM619.9,431.3h1.2v1.2h-1.2zM619.9,408.6h1.2v1.2h-1.2zM619.9,385.8h1.2v1.2h-1.2zM619.9,363.1h1.2v1.2h-1.2zM619.9,340.4h1.2v1.2h-1.2zM619.9,317.7h1.2v1.2h-1.2zM619.9,294.9h1.2v1.2h-1.2zM619.9,272.2h1.2v1.2h-1.2zM619.9,249.5h1.2v1.2h-1.2zM619.9,226.8h1.2v1.2h-1.2zM619.9,204.0h1.2v1.2h-1.2zM619.9,181.3h1.2v1.2h-1.2zM642.6,726.8h1.2v1.2h-1.2zM642.6,704.0h1.2v1.2h-1.2zM642.6,681.3h1.2v1.2h-1.2zM642.6,658.6h1.2v1.2h-1.2zM642.6,635.8h1.2v1.2h-1.2zM642.6,613.1h1.2v1.2h-1.2zM642.6,590.4h1.2v1.2h-1.2zM642.6,567.7h1.2v1.2h-1.2zM642.6,544.9h1.2v1.2h-1.2zM642.6,522.2h1.2v1.2h-1.2zM642.6,499.5h1.2v1.2h-1.2zM642.6,476.8h1.2v1.2h-1.2zM642.6,454.0h1.2v1.2h-1.2zM642.6,431.3h1.2v1.2h-1.2zM642.6,408.6h1.2v1.2h-1.2zM642.6,385.8h1.2v1.2h-1.2zM642.6,363.1h1.2v1.2h-1.2zM642.6,340.4h1.2v1.2h-1.2zM642.6,317.7h1.2v1.2h-1.2zM642.6,294.9h1.2v1.2h-1.2zM642.6,272.2h1.2v1.2h-1.2zM642.6,249.5h1.2v1.2h-1.2zM642.6,226.8h1.2v1.2h-1.2zM642.6,204.0h1.2v1.2h-1.2zM642.6,181.3h1.2v1.2h-1.2zM665.4,726.8h1.2v1.2h-1.2zM665.4,704.0h1.2v1.2h-1.2zM665.4,681.3h1.2v1.2h-1.2zM665.4,658.6h1.2v1.2h-1.2zM665.4,635.8h1.2v1.2h-1.2zM665.4,613.1h1.2v1.2h-1.2zM665.4,590.4h1.2v1.2h-1.2zM665.4,567.7h1.2v1.2h-1.2zM665.4,544.9h1.2v1.2h-1.2zM665.4,522.2h1.2v1.2h-1.2zM665.4,499.5h1.2v1.2h-1.2zM665.4,476.8h1.2v1.2h-1.2zM665.4,454.0h1.2v1.2h-1.2zM665.4,431.3h1.2v1.2h-1.2zM665.4,408.6h1.2v1.2h-1.2zM665.4,385.8h1.2v1.2h-1.2zM665.4,363.1h1.2v1.2h-1.2zM665.4,340.4h1.2v1.2h-1.2zM665.4,317.7h1.2v1.2h-1.2zM665.4,294.9h1.2v1.2h-1.2zM665.4,272.2h1.2v1.2h-1.2zM665.4,249.5h1.2v1.2h-1.2zM665.4,226.8h1.2v1.2h-1.2zM665.4,204.0h1.2v1.2h-1.2zM665.4,181.3h1.2v1.2h-1.2zM688.1,726.8h1.2v1.2h-1.2zM688.1,704.0h1.2v1.2h-1.2zM688.1,681.3h1.2v1.2h-1.2zM688.1,658.6h1.2v1.2h-1.2zM688.1,635.8h1.2v1.2h-1.2zM688.1,613.1h1.2v1.2h-1.2zM688.1,590.4h1.2v1.2h-1.2zM688.1,567.7h1.2v1.2h-1.2zM688.1,544.9h1.2v1.2h-1.2zM688.1,522.2h1.2v1.2h-1.2zM688.1,499.5h1.2v1.2h-1.2zM688.1,476.8h1.2v1.2h-1.2zM688.1,454.0h1.2v1.2h-1.2zM688.1,431.3h1.2v1.2h-1.2zM688.1,408.6h1.2v1.2h-1.2zM688.1,385.8h1.2v1.2h-1.2zM688.1,363.1h1.2v1.2h-1.2zM688.1,340.4h1.2v1.2h-1.2zM688.1,317.7h1.2v1.2h-1.2zM688.1,294.9h1.2v1.2h-1.2zM688.1,272.2h1.2v1.2h-1.2zM688.1,249.5h1.2v1.2h-1.2zM688.1,226.8h1.2v1.2h-1.2zM688.1,204.0h1.2v1.2h-1.2zM688.1,181.3h1.2v1.2h-1.2zM710.8,726.8h1.2v1.2h-1.2zM710.8,704.0h1.2v1.2h-1.2zM710.8,681.3h1.2v1.2h-1.2zM710.8,658.6h1.2v1.2h-1.2zM710.8,635.8h1.2v1.2h-1.2zM710.8,613.1h1.2v1.2h-1.2zM710.8,590.4h1.2v1.2h-1.2zM710.8,567.7h1.2v1.2h-1.2zM710.8,544.9h1.2v1.2h-1.2zM710.8,522.2h1.2v1.2h-1.2zM710.8,499.5h1.2v1.2h-1.2zM710.8,476.8h1.2v1.2h-1.2zM710.8,454.0h1.2v1.2h-1.2zM710.8,431.3h1.2v1.2h-1.2zM710.8,408.6h1.2v1.2h-1.2zM710.8,385.8h1.2v1.2h-1.2zM710.8,363.1h1.2v1.2h-1.2zM710.8,340.4h1.2v1.2h-1.2zM710.8,317.7h1.2v1.2h-1.2zM710.8,294.9h1.2v1.2h-1.2zM710.8,272.2h1.2v1.2h-1.2zM710.8,249.5h1.2v1.2h-1.2zM710.8,226.8h1.2v1.2h-1.2zM710.8,204.0h1.2v1.2h-1.2zM710.8,181.3h1.2v1.2h-1.2zM733.5,726.8h1.2v1.2h-1.2zM733.5,704.0h1.2v1.2h-1.2zM733.5,681.3h1.2v1.2h-1.2zM733.5,658.6h1.2v1.2h-1.2zM733.5,635.8h1.2v1.2h-1.2zM733.5,613.1h1.2v1.2h-1.2zM733.5,590.4h1.2v1.2h-1.2zM733.5,567.7h1.2v1.2h-1.2zM733.5,544.9h1.2v1.2h-1.2zM733.5,522.2h1.2v1.2h-1.2zM733.5,499.5h1.2v1.2h-1.2zM733.5,476.8h1.2v1.2h-1.2zM733.5,454.0h1.2v1.2h-1.2zM733.5,431.3h1.2v1.2h-1.2zM733.5,408.6h1.2v1.2h-1.2zM733.5,385.8h1.2v1.2h-1.2zM733.5,363.1h1.2v1.2h-1.2zM733.5,340.4h1.2v1.2h-1.2zM733.5,317.7h1.2v1.2h-1.2zM733.5,294.9h1.2v1.2h-1.2zM733.5,272.2h1.2v1.2h-1.2zM733.5,249.5h1.2v1.2h-1.2zM733.5,226.8h1.2v1.2h-1.2zM733.5,204.0h1.2v1.2h-1.2zM733.5,181.3h1.2v1.2h-1.2zM756.3,726.8h1.2v1.2h-1.2zM756.3,704.0h1.2v1.2h-1.2zM756.3,681.3h1.2v1.2h-1.2zM756.3,658.6h1.2v1.2h-1.2zM756.3,635.8h1.2v1.2h-1.2zM756.3,613.1h1.2v1.2h-1.2zM756.3,590.4h1.2v1.2h-1.2zM756.3,567.7h1.2v1.2h-1.2zM756.3,544.9h1.2v1.2h-1.2zM756.3,522.2h1.2v1.2h-1.2zM756.3,499.5h1.2v1.2h-1.2zM756.3,476.8h1.2v1.2h-1.2zM756.3,454.0h1.2v1.2h-1.2zM756.3,431.3h1.2v1.2h-1.2zM756.3,408.6h1.2v1.2h-1.2zM756.3,385.8h1.2v1.2h-1.2zM756.3,363.1h1.2v1.2h-1.2zM756.3,340.4h1.2v1.2h-1.2zM756.3,317.7h1.2v1.2h-1.2zM756.3,294.9h1.2v1.2h-1.2zM756.3,272.2h1.2v1.2h-1.2zM756.3,249.5h1.2v1.2h-1.2zM756.3,226.8h1.2v1.2h-1.2zM756.3,204.0h1.2v1.2h-1.2zM756.3,181.3h1.2v1.2h-1.2zM779.0,726.8h1.2v1.2h-1.2zM779.0,704.0h1.2v1.2h-1.2zM779.0,681.3h1.2v1.2h-1.2zM779.0,658.6h1.2v1.2h-1.2zM779.0,635.8h1.2v1.2h-1.2zM779.0,613.1h1.2v1.2h-1.2zM779.0,590.4h1.2v1.2h-1.2zM779.0,567.7h1.2v1.2h-1.2zM779.0,544.9h1.2v1.2h-1.2zM779.0,522.2h1.2v1.2h-1.2zM779.0,499.5h1.2v1.2h-1.2zM779.0,476.8h1.2v1.2h-1.2zM779.0,454.0h1.2v1.2h-1.2zM779.0,431.3h1.2v1.2h-1.2zM779.0,408.6h1.2v1.2h-1.2zM779.0,385.8h1.2v1.2h-1.2zM779.0,363.1h1.2v1.2h-1.2zM779.0,340.4h1.2v1.2h-1.2zM779.0,317.7h1.2v1.2h-1.2zM779.0,294.9h1.2v1.2h-1.2zM779.0,272.2h1.2v1.2h-1.2zM779.0,249.5h1.2v1.2h-1.2zM779.0,226.8h1.2v1.2h-1.2zM779.0,204.0h1.2v1.2h-1.2zM779.0,181.3h1.2v1.2h-1.2zM801.7,726.8h1.2v1.2h-1.2zM801.7,704.0h1.2v1.2h-1.2zM801.7,681.3h1.2v1.2h-1.2zM801.7,658.6h1.2v1.2h-1.2zM801.7,635.8h1.2v1.2h-1.2zM801.7,613.1h1.2v1.2h-1.2zM801.7,590.4h1.2v1.2h-1.2zM801.7,567.7h1.2v1.2h-1.2zM801.7,544.9h1.2v1.2h-1.2zM801.7,522.2h1.2v1.2h-1.2zM801.7,499.5h1.2v1.2h-1.2zM801.7,476.8h1.2v1.2h-1.2zM801.7,454.0h1.2v1.2h-1.2zM801.7,431.3h1.2v1.2h-1.2zM801.7,408.6h1.2v1.2h-1.2zM801.7,385.8h1.2v1.2h-1.2zM801.7,363.1h1.2v1.2h-1.2zM801.7,340.4h1.2v1.2h-1.2zM801.7,317.7h1.2v1.2h-1.2zM801.7,294.9h1.2v1.2h-1.2zM801.7,272.2h1.2v1.2h-1.2zM801.7,249.5h1.2v1.2h-1.2zM801.7,226.8h1.2v1.2h-1.2zM801.7,204.0h1.2v1.2h-1.2zM801.7,181.3h1.2v1.2h-1.2zM824.4,726.8h1.2v1.2h-1.2zM824.4,704.0h1.2v1.2h-1.2zM824.4,681.3h1.2v1.2h-1.2zM824.4,658.6h1.2v1.2h-1.2zM824.4,635.8h1.2v1.2h-1.2zM824.4,613.1h1.2v1.2h-1.2zM824.4,590.4h1.2v1.2h-1.2zM824.4,567.7h1.2v1.2h-1.2zM824.4,544.9h1.2v1.2h-1.2zM824.4,522.2h1.2v1.2h-1.2zM824.4,499.5h1.2v1.2h-1.2zM824.4,476.8h1.2v1.2h-1.2zM824.4,454.0h1.2v1.2h-1.2zM824.4,431.3h1.2v1.2h-1.2zM824.4,408.6h1.2v1.2h-1.2zM824.4,385.8h1.2v1.2h-1.2zM824.4,363.1h1.2v1.2h-1.2zM824.4,340.4h1.2v1.2h-1.2zM824.4,317.7h1.2v1.2h-1.2zM824.4,294.9h1.2v1.2h-1.2zM824.4,272.2h1.2v1.2h-1.2zM824.4,249.5h1.2v1.2h-1.2zM824.4,226.8h1.2v1.2h-1.2zM824.4,204.0h1.2v1.2h-1.2zM824.4,181.3h1.2v1.2h-1.2zM847.2,726.8h1.2v1.2h-1.2zM847.2,704.0h1.2v1.2h-1.2zM847.2,681.3h1.2v1.2h-1.2zM847.2,658.6h1.2v1.2h-1.2zM847.2,635.8h1.2v1.2h-1.2zM847.2,613.1h1.2v1.2h-1.2zM847.2,590.4h1.2v1.2h-1.2zM847.2,567.7h1.2v1.2h-1.2zM847.2,544.9h1.2v1.2h-1.2zM847.2,522.2h1.2v1.2h-1.2zM847.2,499.5h1.2v1.2h-1.2zM847.2,476.8h1.2v1.2h-1.2zM847.2,454.0h1.2v1.2h-1.2zM847.2,431.3h1.2v1.2h-1.2zM847.2,408.6h1.2v1.2h-1.2zM847.2,385.8h1.2v1.2h-1.2zM847.2,363.1h1.2v1.2h-1.2zM847.2,340.4h1.2v1.2h-1.2zM847.2,317.7h1.2v1.2h-1.2zM847.2,294.9h1.2v1.2h-1.2zM847.2,272.2h1.2v1.2h-1.2zM847.2,249.5h1.2v1.2h-1.2zM847.2,226.8h1.2v1.2h-1.2zM847.2,204.0h1.2v1.2h-1.2zM847.2,181.3h1.2v1.2h-1.2zM869.9,726.8h1.2v1.2h-1.2zM869.9,704.0h1.2v1.2h-1.2zM869.9,681.3h1.2v1.2h-1.2zM869.9,658.6h1.2v1.2h-1.2zM869.9,635.8h1.2v1.2h-1.2zM869.9,613.1h1.2v1.2h-1.2zM869.9,590.4h1.2v1.2h-1.2zM869.9,567.7h1.2v1.2h-1.2zM869.9,544.9h1.2v1.2h-1.2zM869.9,522.2h1.2v1.2h-1.2zM869.9,499.5h1.2v1.2h-1.2zM869.9,476.8h1.2v1.2h-1.2zM869.9,454.0h1.2v1.2h-1.2zM869.9,431.3h1.2v1.2h-1.2zM869.9,408.6h1.2v1.2h-1.2zM869.9,385.8h1.2v1.2h-1.2zM869.9,363.1h1.2v1.2h-1.2zM869.9,340.4h1.2v1.2h-1.2zM869.9,317.7h1.2v1.2h-1.2zM869.9,294.9h1.2v1.2h-1.2zM869.9,272.2h1.2v1.2h-1.2zM869.9,249.5h1.2v1.2h-1.2zM869.9,226.8h1.2v1.2h-1.2zM869.9,204.0h1.2v1.2h-1.2zM869.9,181.3h1.2v1.2h-1.2zM892.6,726.8h1.2v1.2h-1.2zM892.6,704.0h1.2v1.2h-1.2zM892.6,681.3h1.2v1.2h-1.2zM892.6,658.6h1.2v1.2h-1.2zM892.6,635.8h1.2v1.2h-1.2zM892.6,613.1h1.2v1.2h-1.2zM892.6,590.4h1.2v1.2h-1.2zM892.6,567.7h1.2v1.2h-1.2zM892.6,544.9h1.2v1.2h-1.2zM892.6,522.2h1.2v1.2h-1.2zM892.6,499.5h1.2v1.2h-1.2zM892.6,476.8h1.2v1.2h-1.2zM892.6,454.0h1.2v1.2h-1.2zM892.6,431.3h1.2v1.2h-1.2zM892.6,408.6h1.2v1.2h-1.2zM892.6,385.8h1.2v1.2h-1.2zM892.6,363.1h1.2v1.2h-1.2zM892.6,340.4h1.2v1.2h-1.2zM892.6,317.7h1.2v1.2h-1.2zM892.6,294.9h1.2v1.2h-1.2zM892.6,272.2h1.2v1.2h-1.2zM892.6,249.5h1.2v1.2h-1.2zM892.6,226.8h1.2v1.2h-1.2zM892.6,204.0h1.2v1.2h-1.2zM892.6,181.3h1.2v1.2h-1.2zM915.4,726.8h1.2v1.2h-1.2zM915.4,704.0h1.2v1.2h-1.2zM915.4,681.3h1.2v1.2h-1.2zM915.4,658.6h1.2v1.2h-1.2zM915.4,635.8h1.2v1.2h-1.2zM915.4,613.1h1.2v1.2h-1.2zM915.4,590.4h1.2v1.2h-1.2zM915.4,567.7h1.2v1.2h-1.2zM915.4,544.9h1.2v1.2h-1.2zM915.4,522.2h1.2v1.2h-1.2zM915.4,499.5h1.2v1.2h-1.2zM915.4,476.8h1.2v1.2h-1.2zM915.4,454.0h1.2v1.2h-1.2zM915.4,431.3h1.2v1.2h-1.2zM915.4,408.6h1.2v1.2h-1.2zM915.4,385.8h1.2v1.2h-1.2zM915.4,363.1h1.2v1.2h-1.2zM915.4,340.4h1.2v1.2h-1.2zM915.4,317.7h1.2v1.2h-1.2zM915.4,294.9h1.2v1.2h-1.2zM915.4,272.2h1.2v1.2h-1.2zM915.4,249.5h1.2v1.2h-1.2zM915.4,226.8h1.2v1.2h-1.2zM915.4,204.0h1.2v1.2h-1.2zM915.4,181.3h1.2v1.2h-1.2zM938.1,726.8h1.2v1.2h-1.2zM938.1,704.0h1.2v1.2h-1.2zM938.1,681.3h1.2v1.2h-1.2zM938.1,658.6h1.2v1.2h-1.2zM938.1,635.8h1.2v1.2h-1.2zM938.1,613.1h1.2v1.2h-1.2zM938.1,590.4h1.2v1.2h-1.2zM938.1,567.7h1.2v1.2h-1.2zM938.1,544.9h1.2v1.2h-1.2zM938.1,522.2h1.2v1.2h-1.2zM938.1,499.5h1.2v1.2h-1.2zM938.1,476.8h1.2v1.2h-1.2zM938.1,454.0h1.2v1.2h-1.2zM938.1,431.3h1.2v1.2h-1.2zM938.1,408.6h1.2v1.2h-1.2zM938.1,385.8h1.2v1.2h-1.2zM938.1,363.1h1.2v1.2h-1.2zM938.1,340.4h1.2v1.2h-1.2zM938.1,317.7h1.2v1.2h-1.2zM938.1,294.9h1.2v1.2h-1.2zM938.1,272.2h1.2v1.2h-1.2zM938.1,249.5h1.2v1.2h-1.2zM938.1,226.8h1.2v1.2h-1.2zM938.1,204.0h1.2v1.2h-1.2zM938.1,181.3h1.2v1.2h-1.2zM960.8,726.8h1.2v1.2h-1.2zM960.8,704.0h1.2v1.2h-1.2zM960.8,681.3h1.2v1.2h-1.2zM960.8,658.6h1.2v1.2h-1.2zM960.8,635.8h1.2v1.2h-1.2zM960.8,613.1h1.2v1.2h-1.2zM960.8,590.4h1.2v1.2h-1.2zM960.8,567.7h1.2v1.2h-1.2zM960.8,544.9h1.2v1.2h-1.2zM960.8,522.2h1.2v1.2h-1.2zM960.8,499.5h1.2v1.2h-1.2zM960.8,476.8h1.2v1.2h-1.2zM960.8,454.0h1.2v1.2h-1.2zM960.8,431.3h1.2v1.2h-1.2zM960.8,408.6h1.2v1.2h-1.2zM960.8,385.8h1.2v1.2h-1.2zM960.8,363.1h1.2v1.2h-1.2zM960.8,340.4h1.2v1.2h-1.2zM960.8,317.7h1.2v1.2h-1.2zM960.8,294.9h1.2v1.2h-1.2zM960.8,272.2h1.2v1.2h-1.2zM960.8,249.5h1.2v1.2h-1.2zM960.8,226.8h1.2v1.2h-1.2zM960.8,204.0h1.2v1.2h-1.2zM960.8,181.3h1.2v1.2h-1.2zM983.5,726.8h1.2v1.2h-1.2zM983.5,704.0h1.2v1.2h-1.2zM983.5,681.3h1.2v1.2h-1.2zM983.5,658.6h1.2v1.2h-1.2zM983.5,635.8h1.2v1.2h-1.2zM983.5,613.1h1.2v1.2h-1.2zM983.5,590.4h1.2v1.2h-1.2zM983.5,567.7h1.2v1.2h-1.2zM983.5,544.9h1.2v1.2h-1.2zM983.5,522.2h1.2v1.2h-1.2zM983.5,499.5h1.2v1.2h-1.2zM983.5,476.8h1.2v1.2h-1.2zM983.5,454.0h1.2v1.2h-1.2zM983.5,431.3h1.2v1.2h-1.2zM983.5,408.6h1.2v1.2h-1.2zM983.5,385.8h1.2v1.2h-1.2zM983.5,363.1h1.2v1.2h-1.2zM983.5,340.4h1.2v1.2h-1.2zM983.5,317.7h1.2v1.2h-1.2zM983.5,294.9h1.2v1.2h-1.2zM983.5,272.2h1.2v1.2h-1.2zM983.5,249.5h1.2v1.2h-1.2zM983.5,226.8h1.2v1.2h-1.2zM983.5,204.0h1.2v1.2h-1.2zM983.5,181.3h1.2v1.2h-1.2zM1006.3,726.8h1.2v1.2h-1.2zM1006.3,704.0h1.2v1.2h-1.2zM1006.3,681.3h1.2v1.2h-1.2zM1006.3,658.6h1.2v1.2h-1.2zM1006.3,635.8h1.2v1.2h-1.2zM1006.3,613.1h1.2v1.2h-1.2zM1006.3,590.4h1.2v1.2h-1.2zM1006.3,567.7h1.2v1.2h-1.2zM1006.3,544.9h1.2v1.2h-1.2zM1006.3,522.2h1.2v1.2h-1.2zM1006.3,499.5h1.2v1.2h-1.2zM1006.3,476.8h1.2v1.2h-1.2zM1006.3,454.0h1.2v1.2h-1.2zM1006.3,431.3h1.2v1.2h-1.2zM1006.3,408.6h1.2v1.2h-1.2zM1006.3,385.8h1.2v1.2h-1.2zM1006.3,363.1h1.2v1.2h-1.2zM1006.3,340.4h1.2v1.2h-1.2zM1006.3,317.7h1.2v1.2h-1.2zM1006.3,294.9h1.2v1.2h-1.2zM1006.3,272.2h1.2v1.2h-1.2zM1006.3,249.5h1.2v1.2h-1.2zM1006.3,226.8h1.2v1.2h-1.2zM1006.3,204.0h1.2v1.2h-1.2zM1006.3,181.3h1.2v1.2h-1.2zM1029.0,726.8h1.2v1.2h-1.2zM1029.0,704.0h1.2v1.2h-1.2zM1029.0,681.3h1.2v1.2h-1.2zM1029.0,658.6h1.2v1.2h-1.2zM1029.0,635.8h1.2v1.2h-1.2zM1029.0,613.1h1.2v1.2h-1.2zM1029.0,590.4h1.2v1.2h-1.2zM1029.0,567.7h1.2v1.2h-1.2zM1029.0,544.9h1.2v1.2h-1.2zM1029.0,522.2h1.2v1.2h-1.2zM1029.0,499.5h1.2v1.2h-1.2zM1029.0,476.8h1.2v1.2h-1.2zM1029.0,454.0h1.2v1.2h-1.2zM1029.0,431.3h1.2v1.2h-1.2zM1029.0,408.6h1.2v1.2h-1.2zM1029.0,385.8h1.2v1.2h-1.2zM1029.0,363.1h1.2v1.2h-1.2zM1029.0,340.4h1.2v1.2h-1.2zM1029.0,317.7h1.2v1.2h-1.2zM1029.0,294.9h1.2v1.2h-1.2zM1029.0,272.2h1.2v1.2h-1.2zM1029.0,249.5h1.2v1.2h-1.2zM1029.0,226.8h1.2v1.2h-1.2zM1029.0,204.0h1.2v1.2h-1.2zM1029.0,181.3h1.2v1.2h-1.2zM1051.7,726.8h1.2v1.2h-1.2zM1051.7,704.0h1.2v1.2h-1.2zM1051.7,681.3h1.2v1.2h-1.2zM1051.7,658.6h1.2v1.2h-1.2zM1051.7,635.8h1.2v1.2h-1.2zM1051.7,613.1h1.2v1.2h-1.2zM1051.7,590.4h1.2v1.2h-1.2zM1051.7,567.7h1.2v1.2h-1.2zM1051.7,544.9h1.2v1.2h-1.2zM1051.7,522.2h1.2v1.2h-1.2zM1051.7,499.5h1.2v1.2h-1.2zM1051.7,476.8h1.2v1.2h-1.2zM1051.7,454.0h1.2v1.2h-1.2zM1051.7,431.3h1.2v1.2h-1.2zM1051.7,408.6h1.2v1.2h-1.2zM1051.7,385.8h1.2v1.2h-1.2zM1051.7,363.1h1.2v1.2h-1.2zM1051.7,340.4h1.2v1.2h-1.2zM1051.7,317.7h1.2v1.2h-1.2zM1051.7,294.9h1.2v1.2h-1.2zM1051.7,272.2h1.2v1.2h-1.2zM1051.7,249.5h1.2v1.2h-1.2zM1051.7,226.8h1.2v1.2h-1.2zM1051.7,204.0h1.2v1.2h-1.2zM1051.7,181.3h1.2v1.2h-1.2zM1074.4,726.8h1.2v1.2h-1.2zM1074.4,704.0h1.2v1.2h-1.2zM1074.4,681.3h1.2v1.2h-1.2zM1074.4,658.6h1.2v1.2h-1.2zM1074.4,635.8h1.2v1.2h-1.2zM1074.4,613.1h1.2v1.2h-1.2zM1074.4,590.4h1.2v1.2h-1.2zM1074.4,567.7h1.2v1.2h-1.2zM1074.4,544.9h1.2v1.2h-1.2zM1074.4,522.2h1.2v1.2h-1.2zM1074.4,499.5h1.2v1.2h-1.2zM1074.4,476.8h1.2v1.2h-1.2zM1074.4,454.0h1.2v1.2h-1.2zM1074.4,431.3h1.2v1.2h-1.2zM1074.4,408.6h1.2v1.2h-1.2zM1074.4,385.8h1.2v1.2h-1.2zM1074.4,363.1h1.2v1.2h-1.2zM1074.4,340.4h1.2v1.2h-1.2zM1074.4,317.7h1.2v1.2h-1.2zM1074.4,294.9h1.2v1.2h-1.2zM1074.4,272.2h1.2v1.2h-1.2zM1074.4,249.5h1.2v1.2h-1.2zM1074.4,226.8h1.2v1.2h-1.2zM1074.4,204.0h1.2v1.2h-1.2zM1074.4,181.3h1.2v1.2h-1.2zM1097.2,726.8h1.2v1.2h-1.2zM1097.2,704.0h1.2v1.2h-1.2zM1097.2,681.3h1.2v1.2h-1.2zM1097.2,658.6h1.2v1.2h-1.2zM1097.2,635.8h1.2v1.2h-1.2zM1097.2,613.1h1.2v1.2h-1.2zM1097.2,590.4h1.2v1.2h-1.2zM1097.2,567.7h1.2v1.2h-1.2zM1097.2,544.9h1.2v1.2h-1.2zM1097.2,522.2h1.2v1.2h-1.2zM1097.2,499.5h1.2v1.2h-1.2zM1097.2,476.8h1.2v1.2h-1.2zM1097.2,454.0h1.2v1.2h-1.2zM1097.2,431.3h1.2v1.2h-1.2zM1097.2,408.6h1.2v1.2h-1.2zM1097.2,385.8h1.2v1.2h-1.2zM1097.2,363.1h1.2v1.2h-1.2zM1097.2,340.4h1.2v1.2h-1.2zM1097.2,317.7h1.2v1.2h-1.2zM1097.2,294.9h1.2v1.2h-1.2zM1097.2,272.2h1.2v1.2h-1.2zM1097.2,249.5h1.2v1.2h-1.2zM1097.2,226.8h1.2v1.2h-1.2zM1097.2,204.0h1.2v1.2h-1.2zM1097.2,181.3h1.2v1.2h-1.2zM1119.9,726.8h1.2v1.2h-1.2zM1119.9,704.0h1.2v1.2h-1.2zM1119.9,681.3h1.2v1.2h-1.2zM1119.9,658.6h1.2v1.2h-1.2zM1119.9,635.8h1.2v1.2h-1.2zM1119.9,613.1h1.2v1.2h-1.2zM1119.9,590.4h1.2v1.2h-1.2zM1119.9,567.7h1.2v1.2h-1.2zM1119.9,544.9h1.2v1.2h-1.2zM1119.9,522.2h1.2v1.2h-1.2zM1119.9,499.5h1.2v1.2h-1.2zM1119.9,476.8h1.2v1.2h-1.2zM1119.9,454.0h1.2v1.2h-1.2zM1119.9,431.3h1.2v1.2h-1.2zM1119.9,408.6h1.2v1.2h-1.2zM1119.9,385.8h1.2v1.2h-1.2zM1119.9,363.1h1.2v1.2h-1.2zM1119.9,340.4h1.2v1.2h-1.2zM1119.9,317.7h1.2v1.2h-1.2zM1119.9,294.9h1.2v1.2h-1.2zM1119.9,272.2h1.2v1.2h-1.2zM1119.9,249.5h1.2v1.2h-1.2zM1119.9,226.8h1.2v1.2h-1.2zM1119.9,204.0h1.2v1.2h-1.2zM1119.9,181.3h1.2v1.2h-1.2z" fill="#dedede"/><path d="M279.6,155 L279.6,732 M506.9,155 L506.9,732 M734.1,155 L734.1,732 M961.4,155 L961.4,732 M95,681.9 L1140,681.9 M95,454.6 L1140,454.6 M95,227.4 L1140,227.4 " stroke="#d6d6d6" stroke-width="1"/><rect x="289" y="214" width="675" height="478" fill="#808080"/><rect x="279.5" y="204.5" width="675.5" height="478.5" fill="#cccccc"/><rect x="280.5" y="205.5" width="672.5" height="475.5" fill="#fff"/><path d="M279.6,155 L279.6,732 M506.9,155 L506.9,732 M734.1,155 L734.1,732 M961.4,155 L961.4,732 M95,681.9 L1140,681.9 M95,454.6 L1140,454.6 M95,227.4 L1140,227.4 " stroke="#f0f0f0" stroke-width="1" clip-path="url(#pc)"/><clipPath id="pc"><rect x="280.5" y="205.5" width="672.5" height="475.5"/></clipPath><rect x="302.5" y="227.6" width="629.2" height="431.6" fill="none" stroke="#3a3aa8" stroke-width="2"/><rect x="328.5" y="277.6" width="220.9" height="308.9" fill="none" stroke="#585858" stroke-width="1"/><path d="M545.5,577.6 L931.6,577.6 M545.5,591.3 L931.6,591.3 M545.5,613.3 L931.6,613.3 M715.7,636.3 L931.6,636.3 M545.5,577.6 L545.5,659.2 M579.6,577.6 L579.6,591.3 M618.4,577.6 L618.4,613.3 M818.2,577.6 L818.2,613.3 M674.4,591.3 L674.4,613.3 M761.5,591.3 L761.5,613.3 M886.5,591.3 L886.5,613.3 M715.7,613.3 L715.7,659.2 M852.2,636.3 L852.2,659.2 M886.5,636.3 L886.5,659.2 " stroke="#333" stroke-width="0.9" fill="none"/><text x="548" y="586" font-family="Liberation Sans" font-size="5.4" fill="#111" text-anchor="start">Item ref</text><text x="583" y="585.5" font-family="Liberation Sans" font-size="5.4" fill="#111" text-anchor="start">Quantity</text><text x="622" y="585.5" font-family="Liberation Sans" font-size="5.4" fill="#111" text-anchor="start">Title/Name, destination, material, dimension etc</text><text x="822" y="586" font-family="Liberation Sans" font-size="5.4" fill="#111" text-anchor="start">Article No./Reference</text><text x="549" y="598.5" font-family="Liberation Sans" font-size="5.4" fill="#111" text-anchor="start">Designed by</text><text x="621" y="598.5" font-family="Liberation Sans" font-size="5.4" fill="#111" text-anchor="start">Checked by</text><text x="689" y="598.5" font-family="Liberation Sans" font-size="5.4" fill="#111" text-anchor="start">Approved by - date</text><text x="768" y="599" font-family="Liberation Sans" font-size="5.4" fill="#111" text-anchor="start">Filename</text><text x="821" y="599" font-family="Liberation Sans" font-size="5.4" fill="#111" text-anchor="start">Date</text><text x="890" y="599" font-family="Liberation Sans" font-size="5.4" fill="#111" text-anchor="start">Scale</text><text x="811" y="609" font-family="Liberation Sans" font-size="6.3" fill="#111" text-anchor="end">file.dxf</text><text x="879.5" y="609.3" font-family="Liberation Sans" font-size="9.5" fill="#111" text-anchor="end">01/01/2025</text><text x="925" y="609.5" font-family="Liberation Sans" font-size="9.3" fill="#111" text-anchor="end">1:1</text><text x="721.5" y="632" font-family="Liberation Sans" font-size="16" fill="#111" text-anchor="start">Title</text><text x="856" y="644.5" font-family="Liberation Sans" font-size="5.4" fill="#111" text-anchor="start">Edition</text><text x="892" y="644.5" font-family="Liberation Sans" font-size="5.4" fill="#111" text-anchor="start">Sheet</text><text x="925" y="655.2" font-family="Liberation Sans" font-size="9.3" fill="#111" text-anchor="end">1/1</text><path d="M427.6,350.9 L427.6,325.2 A14.65,14.65 0 0 1 456.9,325.2 L456.9,350.9 L483.7,371.6 L486.7,367.9 L503.7,382.0 L501.0,385.3 L533.3,411.8 L513.1,532.2 L476.4,532.2 L476.4,536.5 L509.5,536.5 Q511.8,536.8 511.6,539 L511.2,545 Q510.8,548.1 507.5,548.1 L377.5,548.1 Q374,548.1 373.6,545 L373.2,539 Q373,536.5 375.5,536.5 L408.4,536.5 L408.4,532.2 L372.1,532.2 L351.6,411.8 L383.6,385.3 L380.9,382.0 L397.9,367.9 L400.9,371.6 Z" fill="none" stroke="#1a1a1a" stroke-width="0.9"/><circle cx="442.3" cy="324.6" r="3.4" fill="none" stroke="#1a1a1a" stroke-width="0.9"/><path d="M442.3,286.9 L442.3,570.6" stroke="#e83030" stroke-width="1" stroke-dasharray="8,2.5,1,2.5"/><path d="M419,324.6 L465,324.6" stroke="#e83030" stroke-width="1" stroke-dasharray="8,5.5,1.5,3"/><path d="M396,429.6 L490,429.6" stroke="#e83030" stroke-width="1" stroke-dasharray="11,8,1.5,8"/><defs><radialGradient id="ring" cx="438.2" cy="431.6" r="40" gradientUnits="userSpaceOnUse"><stop offset="0.74" stop-color="#ffffff" stop-opacity="0"/><stop offset="0.86" stop-color="#e2e8ef"/><stop offset="0.93" stop-color="#b8c7d4"/><stop offset="0.975" stop-color="#aebfce"/><stop offset="1" stop-color="#c4d0dc"/></radialGradient></defs><circle cx="438.2" cy="431.6" r="39.6" fill="url(#ring)"/><circle cx="442.2" cy="430.2" r="32.2" fill="none" stroke="#1a1a1a" stroke-width="0.9"/><g transform="translate(395,385) scale(0.10661)"><path d="M478,228 Q455,215 440,212 Q410,195 375,200 Q330,210 310,240 Q295,270 295,310 Q285,350 278,385 Q272,440 300,480 Q340,525 395,548 Q415,560 425,585 M478,228 L450,248 Q440,258 440,270 L440,300 Q490,345 540,420 Q580,490 625,585 M150,465 L655,628 L585,690 L150,478 M472,600 Q470,570 492,572 Q505,585 498,615" fill="none" stroke="#1a1a1a" stroke-width="8.5"/></g><path d="M438.5,155 L438.5,732" stroke="#f5d372" stroke-width="1" stroke-dasharray="4,2" opacity="0.85"/><path d="M95,432 L1140,432" stroke="#f5d372" stroke-width="1" stroke-dasharray="4,2" opacity="0.85"/><path d="M423,432 L453.4,432 M438.5,416.4 L438.5,446.8" stroke="#a0a0a0" stroke-width="1.8"/><circle cx="438.5" cy="432" r="5" fill="none" stroke="#f4c842" stroke-width="0.8" stroke-dasharray="1.5,1.5"/><text x="446.6" y="450.6" font-family="Liberation Sans" font-size="14.5" fill="#f2c020" stroke="#f2c020" stroke-width="0.25" letter-spacing="-0.4">Raster</text><path d="M259.2,681.9 L300,681.9 M279.4,661.8 L279.4,702" stroke="#e06060" stroke-width="1.2" opacity="0.9"/></svg>
<div id="vscroll" class="a"></div><div id="hscroll" class="a"></div><div id="zoomlbl" class="a"></div>
<div class="a" style="left:1143.5px;top:310px;width:7px;height:266px;background:#808080;border-radius:4px"></div>
<div class="a" style="left:230px;top:735.5px;width:718px;height:8.5px;background:#808080;border-radius:5px"></div>
<span class="t" style="left:1102px;top:734px;font-size:13px;letter-spacing:0.1px;color:#111">10 &lt; 100</span>
<div id="cmdsep" class="a"></div><div id="cmd" class="a"></div><div id="posrow" class="a"></div>
<span class="t" style="left:77px;top:751px;font-size:13px;letter-spacing:0.25px;color:#1010d0"><i>Kommando:</i> viewport</span>
<div class="a" style="left:1143px;top:750px;width:7px;height:17px;background:#808080;border-radius:4px"></div>
<span class="t" style="left:73px;top:779.2px;font-size:13px;letter-spacing:0.35px;color:#111">Position:</span>
<div class="a" style="left:128px;top:776px;width:999px;height:18px;background:#fff"></div>
<div class="a" style="left:1127px;top:772px;width:26px;height:26px;background:linear-gradient(#f4f4f4,#e6e6e6);border:1px solid #b0b0b0"></div>
<svg style="left:1133px;top:780px" width="14" height="10" viewBox="0 0 14 10" ><rect x="0.5" y="0.5" width="13" height="9" fill="#fff" stroke="#222" stroke-width="1"/><rect x="0.5" y="0.5" width="13" height="2.2" fill="#111"/></svg>
<div id="dock" class="a"></div>
<div class="dtitle" style="top:108px;height:22px"></div>
<svg style="left:1157px;top:110.5px" width="15" height="15" viewBox="0 0 15 15" ><circle cx="7.5" cy="7.5" r="7" fill="#737373"/><path d="M4.8,4.8 L10.2,10.2 M10.2,4.8 L4.8,10.2" stroke="#f0f0f0" stroke-width="1.8"/></svg>
<svg style="left:1175px;top:110.5px" width="15" height="15" viewBox="0 0 15 15" ><circle cx="7.5" cy="7.5" r="7" fill="#737373"/><rect x="5.8" y="3.5" width="5.5" height="4.5" fill="none" stroke="#f0f0f0" stroke-width="1.2"/><rect x="3.6" y="6" width="5.5" height="4.8" fill="#737373" stroke="#f0f0f0" stroke-width="1.2"/></svg>
<span class="t" style="left:1297px;top:113.5px;font-size:12.5px;letter-spacing:0px;color:#3a3a3a">Blockliste</span>
<div class="dbar" style="top:130px;height:26px"></div>
<div class="dbtn" style="left:1156.8px;top:131px;width:35.4px;height:24px"></div>
<div class="dbtn" style="left:1194.0px;top:131px;width:35.4px;height:24px"></div>
<div class="dbtn" style="left:1231.2px;top:131px;width:35.8px;height:24px"></div>
<div class="dbtn" style="left:1268.8px;top:131px;width:35.4px;height:24px"></div>
<div class="dbtn" style="left:1306.0px;top:131px;width:35.4px;height:24px"></div>
<div class="dbtn" style="left:1343.2px;top:131px;width:35.8px;height:24px"></div>
<div class="dbtn" style="left:1380.8px;top:131px;width:36.0px;height:24px"></div>
<div class="dbtn" style="left:1418.6px;top:131px;width:34.8px;height:24px"></div>
<svg style="left:1165.9px;top:137px" width="17" height="12" viewBox="0 0 17 12" ><path d="M1,6 Q8.5,-2.5 16,6 Q8.5,13.5 1,6 Z" fill="#000"/><ellipse cx="8.5" cy="6.3" rx="5" ry="3.6" fill="#fff"/><circle cx="8.5" cy="6.3" r="3" fill="#000"/><path d="M1,6 Q8.5,-2.5 16,6" fill="none" stroke="#000" stroke-width="2"/></svg>
<svg style="left:1203.1px;top:137px" width="17" height="12" viewBox="0 0 17 12" ><path d="M1,6 Q8.5,-2.5 16,6 Q8.5,13.5 1,6 Z" fill="#b8b8b8"/><ellipse cx="8.5" cy="6.3" rx="5" ry="3.6" fill="#fff"/><circle cx="8.5" cy="6.3" r="3" fill="#b8b8b8"/><path d="M1,6 Q8.5,-2.5 16,6" fill="none" stroke="#b8b8b8" stroke-width="2"/></svg>
<svg style="left:1242.0px;top:136px" width="14" height="14" viewBox="0 0 14 14" ><path d="M7,1 L7,13 M1,7 L13,7" stroke="#e00000" stroke-width="3"/></svg>
<svg style="left:1279.4px;top:136px" width="14" height="14" viewBox="0 0 14 14" ><path d="M1,7 L13,7" stroke="#e00000" stroke-width="3"/></svg>
<span class="t" style="left:1314.6px;top:137px;font-size:12.5px;color:#111">a<span style="font-size:13px;color:#333">|</span>b</span>
<svg style="left:1353.0px;top:134.5px" width="16" height="16" viewBox="0 0 17 17" ><path d="M1.6,15.4 L3.5,11.5 L12.8,2.2 L14.8,4.2 L5.5,13.5 Z" fill="#e2a83a" stroke="#8a5a18" stroke-width="0.8" stroke-linejoin="round"/><path d="M12.8,2.2 L14,1 Q15,0.5 15.8,1.3 Q16.5,2 16,3 L14.8,4.2 Z" fill="#e82020" stroke="#901010" stroke-width="0.5"/><path d="M1.6,15.4 L2.5,13.5 L3.5,14.5 Z" fill="#333"/></svg>
<svg style="left:1391.6999999999998px;top:134px" width="14" height="18" viewBox="0 0 14 18" ><rect x="1" y="1" width="12" height="16" fill="#e8e8f0" stroke="#c0c0d0" stroke-width="0.6"/><path d="M5,2 Q8,4 7,8 L7,13 M4,10.5 L7,14.5 L10,10.5" fill="none" stroke="#2040f0" stroke-width="2"/></svg>
<svg style="left:1429.4px;top:136.5px" width="13" height="13" viewBox="0 0 13 13" ><rect x="1" y="1" width="11" height="11" rx="1" fill="#e8906a" stroke="#e03828" stroke-width="1.4"/><path d="M3.5,3.5 L9.5,9.5 M9.5,3.5 L3.5,9.5" stroke="#fff" stroke-width="1.6"/></svg>
<svg style="left:1161px;top:161px" width="17" height="12" viewBox="0 0 17 12" ><path d="M1,6 Q8.5,-2.5 16,6 Q8.5,13.5 1,6 Z" fill="#000"/><ellipse cx="8.5" cy="6.3" rx="5" ry="3.6" fill="#fff"/><circle cx="8.5" cy="6.3" r="3" fill="#000"/><path d="M1,6 Q8.5,-2.5 16,6" fill="none" stroke="#000" stroke-width="2"/></svg>
<span class="rt" style="left:1205.5px;top:161px;">Model (*Model_Space)</span>
<svg style="left:1161px;top:181px" width="17" height="12" viewBox="0 0 17 12" ><path d="M1,6 Q8.5,-2.5 16,6 Q8.5,13.5 1,6 Z" fill="#000"/><ellipse cx="8.5" cy="6.3" rx="5" ry="3.6" fill="#fff"/><circle cx="8.5" cy="6.3" r="3" fill="#000"/><path d="M1,6 Q8.5,-2.5 16,6" fill="none" stroke="#000" stroke-width="2"/></svg>
<svg style="left:1183px;top:179px" width="16" height="16" viewBox="0 0 17 17" ><path d="M1.6,15.4 L3.5,11.5 L12.8,2.2 L14.8,4.2 L5.5,13.5 Z" fill="#e2a83a" stroke="#8a5a18" stroke-width="0.8" stroke-linejoin="round"/><path d="M12.8,2.2 L14,1 Q15,0.5 15.8,1.3 Q16.5,2 16,3 L14.8,4.2 Z" fill="#e82020" stroke="#901010" stroke-width="0.5"/><path d="M1.6,15.4 L2.5,13.5 L3.5,14.5 Z" fill="#333"/></svg>
<span class="rt" style="left:1205.5px;top:181px;">Layout1 (*Paper_Space)</span>
<div class="a" style="left:1156px;top:197px;width:298px;height:20px;background:#d4d4d4"></div>
<svg style="left:1161px;top:201px" width="17" height="12" viewBox="0 0 17 12" ><path d="M1,6 Q8.5,-2.5 16,6 Q8.5,13.5 1,6 Z" fill="#3a4860"/><ellipse cx="8.5" cy="6.3" rx="5" ry="3.6" fill="#fff"/><circle cx="8.5" cy="6.3" r="3" fill="#3a4860"/><path d="M1,6 Q8.5,-2.5 16,6" fill="none" stroke="#3a4860" stroke-width="2"/></svg>
<span class="rt" style="left:1205.5px;top:201px;">Rahmen</span>
<div class="a" style="left:1155px;top:321.5px;width:300px;height:2px;background:#c4c4c4"></div>
<div class="a" style="left:1155px;top:323.5px;width:300px;height:1.5px;background:#e0e0e0"></div>
<div class="dtitle" style="top:325px;height:21px"></div>
<svg style="left:1157px;top:326.5px" width="15" height="15" viewBox="0 0 15 15" ><circle cx="7.5" cy="7.5" r="7" fill="#737373"/><path d="M4.8,4.8 L10.2,10.2 M10.2,4.8 L4.8,10.2" stroke="#f0f0f0" stroke-width="1.8"/></svg>
<svg style="left:1175px;top:326.5px" width="15" height="15" viewBox="0 0 15 15" ><circle cx="7.5" cy="7.5" r="7" fill="#737373"/><rect x="5.8" y="3.5" width="5.5" height="4.5" fill="none" stroke="#f0f0f0" stroke-width="1.2"/><rect x="3.6" y="6" width="5.5" height="4.8" fill="#737373" stroke="#f0f0f0" stroke-width="1.2"/></svg>
<span class="t" style="left:1295px;top:329.5px;font-size:12.5px;letter-spacing:0px;color:#3a3a3a">Layerliste</span>
<div class="dbar" style="top:346px;height:26px"></div>
<div class="dbtn" style="left:1156.5px;top:347px;width:57.5px;height:24px"></div>
<div class="dbtn" style="left:1215.5px;top:347px;width:58.7px;height:24px"></div>
<div class="dbtn" style="left:1275.7px;top:347px;width:58.3px;height:24px"></div>
<div class="dbtn" style="left:1335.5px;top:347px;width:58.7px;height:24px"></div>
<div class="dbtn" style="left:1395.7px;top:347px;width:57.8px;height:24px"></div>
<svg style="left:1177.0px;top:353px" width="17" height="12" viewBox="0 0 17 12" ><path d="M1,6 Q8.5,-2.5 16,6 Q8.5,13.5 1,6 Z" fill="#000"/><ellipse cx="8.5" cy="6.3" rx="5" ry="3.6" fill="#fff"/><circle cx="8.5" cy="6.3" r="3" fill="#000"/><path d="M1,6 Q8.5,-2.5 16,6" fill="none" stroke="#000" stroke-width="2"/></svg>
<svg style="left:1236.6px;top:353px" width="17" height="12" viewBox="0 0 17 12" ><path d="M1,6 Q8.5,-2.5 16,6 Q8.5,13.5 1,6 Z" fill="#b8b8b8"/><ellipse cx="8.5" cy="6.3" rx="5" ry="3.6" fill="#fff"/><circle cx="8.5" cy="6.3" r="3" fill="#b8b8b8"/><path d="M1,6 Q8.5,-2.5 16,6" fill="none" stroke="#b8b8b8" stroke-width="2"/></svg>
<svg style="left:1298.1px;top:352px" width="14" height="14" viewBox="0 0 14 14" ><path d="M7,1 L7,13 M1,7 L13,7" stroke="#e00000" stroke-width="3"/></svg>
<svg style="left:1358.1px;top:352px" width="14" height="14" viewBox="0 0 14 14" ><path d="M1,7 L13,7" stroke="#e00000" stroke-width="3"/></svg>
<svg style="left:1416.85px;top:350.5px" width="16" height="16" viewBox="0 0 17 17" ><path d="M1.6,15.4 L3.5,11.5 L12.8,2.2 L14.8,4.2 L5.5,13.5 Z" fill="#e2a83a" stroke="#8a5a18" stroke-width="0.8" stroke-linejoin="round"/><path d="M12.8,2.2 L14,1 Q15,0.5 15.8,1.3 Q16.5,2 16,3 L14.8,4.2 Z" fill="#e82020" stroke="#901010" stroke-width="0.5"/><path d="M1.6,15.4 L2.5,13.5 L3.5,14.5 Z" fill="#333"/></svg>
<div class="a" style="left:1161px;top:378.5px;width:16px;height:9px;background:#000;border:1px solid #111"></div>
<span class="rt" style="left:1183px;top:377px;color:#1a1a1a">0</span>
<svg style="left:1415px;top:377px" width="17" height="12" viewBox="0 0 17 12" ><path d="M1,6 Q8.5,-2.5 16,6 Q8.5,13.5 1,6 Z" fill="#000"/><ellipse cx="8.5" cy="6.3" rx="5" ry="3.6" fill="#fff"/><circle cx="8.5" cy="6.3" r="3" fill="#000"/><path d="M1,6 Q8.5,-2.5 16,6" fill="none" stroke="#000" stroke-width="2"/></svg>
<svg style="left:1440px;top:375.5px" width="11" height="16" viewBox="0 0 11 16" ><path d="M2.5,7 L2.5,4.5 A3,3 0 0 1 8.5,4.5 L8.5,7" fill="none" stroke="#c4c4c4" stroke-width="1.6"/><rect x="0.5" y="7" width="10" height="8.5" rx="1" fill="#c4c4c4"/></svg>
<div class="a" style="left:1161px;top:398.5px;width:16px;height:9px;background:#108484;border:1px solid #111"></div>
<span class="rt" style="left:1183px;top:397px;color:#1a1a1a">Bemassungen</span>
<svg style="left:1415px;top:397px" width="17" height="12" viewBox="0 0 17 12" ><path d="M1,6 Q8.5,-2.5 16,6 Q8.5,13.5 1,6 Z" fill="#000"/><ellipse cx="8.5" cy="6.3" rx="5" ry="3.6" fill="#fff"/><circle cx="8.5" cy="6.3" r="3" fill="#000"/><path d="M1,6 Q8.5,-2.5 16,6" fill="none" stroke="#000" stroke-width="2"/></svg>
<svg style="left:1440px;top:395.5px" width="11" height="16" viewBox="0 0 11 16" ><path d="M2.5,7 L2.5,4.5 A3,3 0 0 1 8.5,4.5 L8.5,7" fill="none" stroke="#c4c4c4" stroke-width="1.6"/><rect x="0.5" y="7" width="10" height="8.5" rx="1" fill="#c4c4c4"/></svg>
<div class="a" style="left:1161px;top:418.5px;width:16px;height:9px;background:#fff;border:1px solid #111"></div>
<span class="rt" style="left:1183px;top:417px;color:#1a1a1a">Defpoints</span>
<svg style="left:1415px;top:417px" width="17" height="12" viewBox="0 0 17 12" ><path d="M1,6 Q8.5,-2.5 16,6 Q8.5,13.5 1,6 Z" fill="#000"/><ellipse cx="8.5" cy="6.3" rx="5" ry="3.6" fill="#fff"/><circle cx="8.5" cy="6.3" r="3" fill="#000"/><path d="M1,6 Q8.5,-2.5 16,6" fill="none" stroke="#000" stroke-width="2"/></svg>
<svg style="left:1440px;top:415.5px" width="11" height="16" viewBox="0 0 11 16" ><path d="M2.5,7 L2.5,4.5 A3,3 0 0 1 8.5,4.5 L8.5,7" fill="none" stroke="#c4c4c4" stroke-width="1.6"/><rect x="0.5" y="7" width="10" height="8.5" rx="1" fill="#c4c4c4"/></svg>
<div class="a" style="left:1156px;top:433px;width:298px;height:19.5px;background:#0a4fd6"></div>
<div class="a" style="left:1161px;top:438.5px;width:16px;height:9px;background:#3a4258;border:1px solid #111"></div>
<span class="rt" style="left:1183px;top:437px;color:#fff">Rahmen</span>
<svg style="left:1394.5px;top:435.5px" width="16" height="16" viewBox="0 0 17 17" ><path d="M1.6,15.4 L3.5,11.5 L12.8,2.2 L14.8,4.2 L5.5,13.5 Z" fill="#e2a83a" stroke="#8a5a18" stroke-width="0.8" stroke-linejoin="round"/><path d="M12.8,2.2 L14,1 Q15,0.5 15.8,1.3 Q16.5,2 16,3 L14.8,4.2 Z" fill="#e82020" stroke="#901010" stroke-width="0.5"/><path d="M1.6,15.4 L2.5,13.5 L3.5,14.5 Z" fill="#333"/></svg>
<svg style="left:1415px;top:437px" width="17" height="12" viewBox="0 0 17 12" ><path d="M1,6 Q8.5,-2.5 16,6 Q8.5,13.5 1,6 Z" fill="#243060"/><ellipse cx="8.5" cy="6.3" rx="5" ry="3.6" fill="#0a4fd6"/><circle cx="8.5" cy="6.3" r="3" fill="#243060"/><path d="M1,6 Q8.5,-2.5 16,6" fill="none" stroke="#243060" stroke-width="2"/></svg>
<svg style="left:1440px;top:435.5px" width="11" height="16" viewBox="0 0 11 16" ><path d="M2.5,7 L2.5,4.5 A3,3 0 0 1 8.5,4.5 L8.5,7" fill="none" stroke="#a8b8e0" stroke-width="1.6"/><rect x="0.5" y="7" width="10" height="8.5" rx="1" fill="#a8b8e0"/></svg>
<div class="a" style="left:1161px;top:458.5px;width:16px;height:9px;background:#000;border:1px solid #111"></div>
<span class="rt" style="left:1183px;top:457px;color:#1a1a1a">Sichtbar</span>
<svg style="left:1415px;top:457px" width="17" height="12" viewBox="0 0 17 12" ><path d="M1,6 Q8.5,-2.5 16,6 Q8.5,13.5 1,6 Z" fill="#000"/><ellipse cx="8.5" cy="6.3" rx="5" ry="3.6" fill="#fff"/><circle cx="8.5" cy="6.3" r="3" fill="#000"/><path d="M1,6 Q8.5,-2.5 16,6" fill="none" stroke="#000" stroke-width="2"/></svg>
<svg style="left:1440px;top:455.5px" width="11" height="16" viewBox="0 0 11 16" ><path d="M2.5,7 L2.5,4.5 A3,3 0 0 1 8.5,4.5 L8.5,7" fill="none" stroke="#c4c4c4" stroke-width="1.6"/><rect x="0.5" y="7" width="10" height="8.5" rx="1" fill="#c4c4c4"/></svg>
<div class="a" style="left:1161px;top:478.5px;width:16px;height:9px;background:#f00000;border:1px solid #111"></div>
<span class="rt" style="left:1183px;top:477px;color:#1a1a1a">Zentrum</span>
<svg style="left:1415px;top:477px" width="17" height="12" viewBox="0 0 17 12" ><path d="M1,6 Q8.5,-2.5 16,6 Q8.5,13.5 1,6 Z" fill="#000"/><ellipse cx="8.5" cy="6.3" rx="5" ry="3.6" fill="#fff"/><circle cx="8.5" cy="6.3" r="3" fill="#000"/><path d="M1,6 Q8.5,-2.5 16,6" fill="none" stroke="#000" stroke-width="2"/></svg>
<svg style="left:1440px;top:475.5px" width="11" height="16" viewBox="0 0 11 16" ><path d="M2.5,7 L2.5,4.5 A3,3 0 0 1 8.5,4.5 L8.5,7" fill="none" stroke="#c4c4c4" stroke-width="1.6"/><rect x="0.5" y="7" width="10" height="8.5" rx="1" fill="#c4c4c4"/></svg>
<div id="strip" class="a"></div>
<div class="a" style="left:1455px;top:108px;width:1px;height:691px;background:#c8c8c8"></div>
<div class="a" style="left:1463px;top:116px;width:28px;height:2px;background:linear-gradient(90deg,#999 2px,transparent 2px) 0 0/6px 2px repeat-x"></div>
<div class="chk" style="left:1456.5px;top:120.5px;width:42px;height:42px;border-radius:5px"></div>
<div class="chk" style="left:1456.5px;top:167.6px;width:42px;height:42px;border-radius:5px"></div>
<div class="chk" style="left:1456.5px;top:418px;width:42px;height:42.5px;border-radius:5px"></div>
<div class="a" style="left:1462px;top:262px;width:34px;height:1px;background:linear-gradient(90deg,#777 50%,transparent 50%) 0 0/3px 1px repeat-x"></div>
<div class="a" style="left:1462px;top:410.5px;width:34px;height:1px;background:linear-gradient(90deg,#777 50%,transparent 50%) 0 0/3px 1px repeat-x"></div>
<svg style="left:1462.5px;top:126.5px" width="29" height="29" viewBox="0 0 29 29" ><rect x="0.5" y="0.5" width="28" height="28" fill="#fff" stroke="#222" stroke-width="1"/><rect x="0.5" y="0.5" width="28" height="4.5" fill="#000"/><rect x="1.5" y="1.3" width="3" height="3" fill="#fff"/><path d="M8,12 L14,9 L14,22 L8,25 Z" fill="#999" stroke="#555" stroke-width="0.6"/><path d="M12,11 L22,7.5 L22,20.5 L12,24 Z" fill="#fff" stroke="#555" stroke-width="0.7"/><path d="M15,21 L19,11 L20,19" fill="none" stroke="#e03030" stroke-width="0.8"/></svg>
<svg style="left:1462.5px;top:173.5px" width="29" height="29" viewBox="0 0 29 29" ><rect x="0.5" y="0.5" width="28" height="28" fill="#fff" stroke="#222" stroke-width="1"/><rect x="0.5" y="0.5" width="28" height="4.5" fill="#000"/><rect x="1.5" y="1.3" width="3" height="3" fill="#fff"/><rect x="5" y="9" width="10" height="8" fill="#f4e8b0" stroke="#777" stroke-width="0.7"/><circle cx="16" cy="17.5" r="5" fill="#f4e8b0" stroke="#777" stroke-width="0.7"/></svg>
<svg style="left:1462.5px;top:220.5px" width="29" height="29" viewBox="0 0 29 29" ><rect x="0.5" y="0.5" width="28" height="28" fill="#fff" stroke="#222" stroke-width="1"/><rect x="0.5" y="0.5" width="28" height="4.5" fill="#000"/><rect x="1.5" y="1.3" width="3" height="3" fill="#fff"/><rect x="6" y="10" width="17" height="12" rx="2" fill="#f4f4f4" stroke="#b8c8e8" stroke-width="0.8"/></svg>
<svg style="left:1462.5px;top:276.5px" width="29" height="29" viewBox="0 0 29 29" ><rect x="0.5" y="0.5" width="28" height="28" fill="#fff" stroke="#222" stroke-width="1"/><rect x="0.5" y="0.5" width="28" height="4.5" fill="#000"/><rect x="1.5" y="1.3" width="3" height="3" fill="#fff"/><g fill="#111"><rect x="4" y="10" width="4" height="3"/><rect x="4" y="15.5" width="4" height="3"/><rect x="4" y="21" width="4" height="3"/></g><g fill="none" stroke="#333" stroke-width="0.7"><rect x="10" y="10" width="14" height="3"/><rect x="10" y="15.5" width="14" height="3"/><rect x="10" y="21" width="14" height="3"/></g></svg>
<svg style="left:1462.5px;top:322.5px" width="29" height="29" viewBox="0 0 29 29" ><rect x="0.5" y="0.5" width="28" height="28" fill="#fff" stroke="#222" stroke-width="1"/><rect x="0.5" y="0.5" width="28" height="4.5" fill="#000"/><rect x="1.5" y="1.3" width="3" height="3" fill="#fff"/><path d="M6,10 L23,10 L16,17 L16,25 L13,25 L13,17 Z" fill="#aaa" stroke="#555" stroke-width="0.7"/><ellipse cx="14.5" cy="10" rx="8.5" ry="1.5" fill="#ddd" stroke="#555" stroke-width="0.6"/></svg>
<svg style="left:1462.5px;top:368.5px" width="29" height="29" viewBox="0 0 29 29" ><rect x="0.5" y="0.5" width="28" height="28" fill="#fff" stroke="#222" stroke-width="1"/><rect x="0.5" y="0.5" width="28" height="4.5" fill="#000"/><rect x="1.5" y="1.3" width="3" height="3" fill="#fff"/><path d="M5,9 L11,14 L11,21 L5,26 Z" fill="#fff" stroke="#555" stroke-width="0.7"/><rect x="11" y="13" width="11" height="9" rx="1" fill="#999"/><path d="M4,17.5 L25,17.5" stroke="#e07070" stroke-width="0.6" stroke-dasharray="1.5,1"/></svg>
<svg style="left:1462.5px;top:425px" width="29" height="29" viewBox="0 0 29 29" ><rect x="0.5" y="0.5" width="28" height="28" fill="#fff" stroke="#222" stroke-width="1"/><rect x="0.5" y="0.5" width="28" height="4.5" fill="#000"/><rect x="1.5" y="1.3" width="3" height="3" fill="#fff"/><g stroke="#666" stroke-width="0.6"><path d="M4,9 L15,9 M4,13 L14,13 M4,17 L16,17 M4,21 L16,21"/></g><path d="M1,24.5 L28,24.5" stroke="#333" stroke-width="0.7"/><text x="9" y="28" font-family="Liberation Sans" font-size="3.5" fill="#333">command</text></svg>
<svg style="left:1462.5px;top:471.5px" width="29" height="29" viewBox="0 0 29 29" ><rect x="0.5" y="0.5" width="28" height="28" fill="#fff" stroke="#222" stroke-width="1"/><rect x="0.5" y="0.5" width="28" height="4.5" fill="#000"/><rect x="1.5" y="1.3" width="3" height="3" fill="#fff"/><rect x="8" y="9" width="13" height="16" rx="1" fill="#c8903a" stroke="#8a6020" stroke-width="0.6"/><rect x="9.5" y="11" width="10" height="12.5" fill="#f6f6f6"/><rect x="11" y="8" width="7" height="3" rx="1" fill="#999"/></svg>
<div id="status" class="a"></div>
<span class="t" style="left:2px;top:808px;font-size:10px;letter-spacing:0.35px;color:#1e1e1e">70,110</span>
<span class="t" style="left:2px;top:828px;font-size:10px;letter-spacing:0.35px;color:#1e1e1e">@-299.6252,-238.3622</span>
<div class="a" style="left:253.5px;top:802px;width:1px;height:40px;background:#8a8a8a"></div>
<span class="t" style="left:256px;top:808px;font-size:10px;letter-spacing:0.35px;color:#1e1e1e">130.384&lt;58°</span>
<span class="t" style="left:256px;top:828px;font-size:10px;letter-spacing:0.35px;color:#1e1e1e">@382.8731&lt;219°</span>
<div class="a" style="left:506.5px;top:819px;width:6px;height:6px;border-radius:3px;background:#c4c4c4"></div>
<div class="a" style="left:939.5px;top:819px;width:6px;height:6px;border-radius:3px;background:#c4c4c4"></div>
<div class="a" style="left:1269px;top:819px;width:6px;height:6px;border-radius:3px;background:#c4c4c4"></div>
<span class="t" style="left:662px;top:818px;font-size:10px;letter-spacing:0.2px;color:#1e1e1e">Position</span>
<span class="t" style="left:754px;top:818px;font-size:10px;letter-spacing:0.2px;color:#1e1e1e">Abbrechen</span>
<span class="t" style="left:948.5px;top:818px;font-size:10px;letter-spacing:0.2px;color:#1e1e1e">Keine Objekte selektiert.</span>
<svg style="left:716px;top:806px" width="20" height="31" viewBox="0 0 20 31" ><rect x="1" y="1" width="17" height="28" rx="8.5" fill="#fff" stroke="#333" stroke-width="0.9"/><path d="M1,13 L18,13 M9.5,1 L9.5,13" stroke="#333" stroke-width="0.9"/><rect x="8" y="3.5" width="3" height="7" rx="1.5" fill="none" stroke="#333" stroke-width="0.8"/></svg>
</body></html>
